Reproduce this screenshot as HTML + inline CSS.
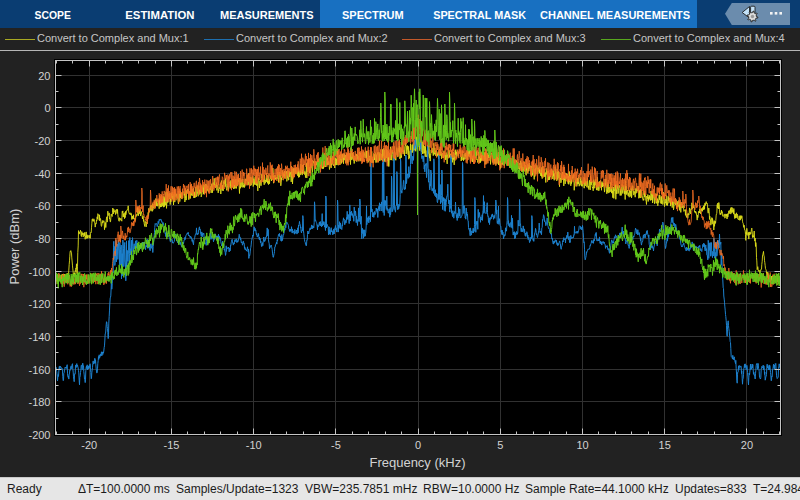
<!DOCTYPE html>
<html><head><meta charset="utf-8">
<style>
*{margin:0;padding:0;box-sizing:border-box}
html,body{width:800px;height:500px;overflow:hidden;background:#222222;font-family:"Liberation Sans",sans-serif}
.abs{position:absolute;white-space:nowrap}
#tb{position:absolute;left:0;top:0;width:800px;height:28px;background:#0a3d72}
#tbl{position:absolute;left:320px;top:0;width:377px;height:28px;background:#1870c1}
.tab{position:absolute;top:8px;font-weight:bold;font-size:11px;color:#ffffff;line-height:14px}
.lg{position:absolute;top:31px;font-size:11px;color:#c6c6c6;line-height:14px}
.ll{position:absolute;top:39px;height:1px;width:30px}
#sep{position:absolute;left:0;top:50px;width:800px;height:1px;background:#b6b6b6}
#sb{position:absolute;left:0;top:477px;width:800px;height:23px;background:#e6e6e6;border-top:1px solid #c9c9c9}
.st{position:absolute;top:482px;font-size:12px;color:#1b1b1b;line-height:14px}
.yt{position:absolute;font-size:10.5px;color:#d2d2d2;line-height:12px;text-align:right;width:30px}
.xt{position:absolute;top:440px;font-size:10.5px;color:#d2d2d2;line-height:12px;text-align:center;width:30px}
</style></head><body>
<div id="tb"></div><div id="tbl"></div>
<div class="tab" style="left:34.6px;top:8.6px;font-size:10.4px">SCOPE</div>
<div class="tab" style="left:125.3px;top:7.8px;font-size:11.35px">ESTIMATION</div>
<div class="tab" style="left:220px">MEASUREMENTS</div>
<div class="tab" style="left:342px">SPECTRUM</div>
<div class="tab" style="left:433.2px;top:8.1px;font-size:10.82px">SPECTRAL MASK</div>
<div class="tab" style="left:540px">CHANNEL MEASUREMENTS</div>
<svg class="abs" style="left:0;top:0" width="800" height="28">
<polygon points="725,13.8 731.8,3 790,3 790,25 731.8,25" fill="#6b8cad"/>
<polygon points="742.2,12.5 749.5,6.5 749.5,18" fill="#c4e2f8" stroke="#1e1e1e" stroke-width="0.9" stroke-linejoin="round"/>
<rect x="750.6" y="6.2" width="4.4" height="9.5" rx="1" fill="#c4e2f8" stroke="#1e1e1e" stroke-width="0.9"/>
<polygon points="756.40,16.50 757.88,17.01 757.66,18.09 756.10,17.99 755.74,18.67 755.26,19.26 755.94,20.66 755.03,21.27 753.99,20.10 753.26,20.33 752.50,20.40 751.99,21.88 750.91,21.66 751.01,20.10 750.33,19.74 749.74,19.26 748.34,19.94 747.73,19.03 748.90,17.99 748.67,17.26 748.60,16.50 747.12,15.99 747.34,14.91 748.90,15.01 749.26,14.33 749.74,13.74 749.06,12.34 749.97,11.73 751.01,12.90 751.74,12.67 752.50,12.60 753.01,11.12 754.09,11.34 753.99,12.90 754.67,13.26 755.26,13.74 756.66,13.06 757.27,13.97 756.10,15.01 756.33,15.74" fill="#dcdcdc" stroke="#1e1e1e" stroke-width="0.9" stroke-linejoin="round"/>
<circle cx="752.5" cy="16.5" r="1.7" fill="#9a9a9a"/>
<rect x="770" y="12" width="2.6" height="2.6" fill="#f4f4f4"/><rect x="774.7" y="12" width="2.6" height="2.6" fill="#f4f4f4"/><rect x="779.4" y="12" width="2.6" height="2.6" fill="#f4f4f4"/>
</svg>
<div class="ll" style="left:5px;background:#a9a922"></div>
<div class="lg" style="left:37px">Convert to Complex and Mux:1</div>
<div class="ll" style="left:204px;background:#1d6fb0"></div>
<div class="lg" style="left:236px">Convert to Complex and Mux:2</div>
<div class="ll" style="left:402px;background:#c4592a"></div>
<div class="lg" style="left:434px">Convert to Complex and Mux:3</div>
<div class="ll" style="left:601px;background:#58a81e"></div>
<div class="lg" style="left:633px">Convert to Complex and Mux:4</div>
<div id="sep"></div>
<svg class="abs" style="left:0;top:0" width="800" height="477">
<rect x="54.5" y="59.5" width="727" height="376" fill="none" stroke="#000" stroke-width="1"/>
<rect x="55.5" y="60.5" width="725" height="374" fill="#000"/>
<path d="M89.5 60.5V434.5M171.5 60.5V434.5M253.5 60.5V434.5M335.5 60.5V434.5M418.5 60.5V434.5M500.5 60.5V434.5M582.5 60.5V434.5M664.5 60.5V434.5M746.5 60.5V434.5M55.5 75.5H780.5M55.5 107.5H780.5M55.5 140.5H780.5M55.5 173.5H780.5M55.5 205.5H780.5M55.5 238.5H780.5M55.5 271.5H780.5M55.5 303.5H780.5M55.5 336.5H780.5M55.5 369.5H780.5M55.5 401.5H780.5" stroke="#313131" stroke-width="1" fill="none"/>
<g fill="none" stroke-width="1" stroke-linejoin="round">
<path d="M55.5 282.9L55.8 281.3L56.2 281L56.5 277.1L56.8 275.7L57.2 281.7L57.5 279.3L57.8 275L58.2 281.3L58.5 281.8L58.8 276.8L59.2 280.4L59.5 275.3L59.8 277.7L60.2 280.3L60.5 277.4L60.8 278.1L61.2 275.2L61.5 280L61.8 277.7L62.2 274L62.5 279.6L62.8 280.9L63.2 277.8L63.5 279.1L63.8 280.8L64.2 274L64.5 278L64.8 280.5L65.2 274.5L65.5 275.2L65.8 277.4L66.2 278.5L66.5 277.1L66.8 277L67.2 273.3L67.5 278L67.8 274.9L68.2 273.4L68.5 274.5L68.8 270.2L69.2 264.3L69.5 260.8L69.8 256.2L70.2 251.2L70.5 251.5L70.8 250.6L71.2 252.1L71.5 253.1L71.8 257.9L72.2 262L72.5 265.9L72.8 268.9L73.2 272.5L73.5 276L73.8 276.5L74.2 272.8L74.5 275.3L74.8 274.1L75.2 270.7L75.5 271.4L75.8 268L76.2 268.6L76.5 263.8L76.8 272L77.2 274L77.5 266.2L77.8 252.5L78.2 245.9L78.5 230.6L78.8 231.8L79.2 234.1L79.5 232.2L79.8 232.6L80.2 231.8L80.5 230.2L80.8 232.7L81.2 236.3L81.5 236.6L81.8 231.6L82.2 234.8L82.5 233.1L82.8 233.1L83.2 236.9L83.5 235.4L83.8 233L84.2 232.7L84.5 235.8L84.8 232.5L85.2 239.3L85.5 236L85.8 236.6L86.2 231.9L86.5 237.2L86.8 238.6L87.2 234.8L87.5 238.1L87.8 236.2L88.2 236.5L88.5 236L88.8 235.4L89.2 238.2L89.5 236.1L89.8 235.2L90.2 238.4L90.5 233.3L90.8 232.2L91.2 232.6L91.5 227.8L91.8 223.8L92.2 219L92.5 218.8L92.8 221.2L93.2 220.2L93.5 221.3L93.8 218.8L94.2 219.8L94.5 221.2L94.8 223.1L95.2 227.1L95.5 225.2L95.8 223.1L96.2 223.7L96.5 220L96.8 220.7L97.2 216.8L97.5 219.2L97.8 213.7L98.2 214.3L98.5 215.2L98.8 215L99.2 220.2L99.5 214.8L99.8 220.9L100.2 218.8L100.5 218.5L100.8 220.5L101.2 225.4L101.5 226.4L101.8 225.3L102.2 221.8L102.5 223.1L102.8 220.4L103.2 222.4L103.5 221.1L103.8 220.8L104.2 221.6L104.5 229.7L104.8 226.8L105.2 224.4L105.5 222.6L105.8 227.5L106.2 220.3L106.5 218.1L106.8 216.8L107.2 222.1L107.5 218.9L107.8 211.2L108.2 214.4L108.5 215.3L108.8 215.5L109.2 212.9L109.5 218.8L109.8 218L110.2 221.8L110.5 221.8L110.8 218.6L111.2 214L111.5 214.5L111.8 215.8L112.2 216.5L112.5 212.5L112.8 208L113.2 212.1L113.5 213.8L113.8 209.2L114.2 212L114.5 212.1L114.8 211.2L115.2 210.4L115.5 214.5L115.8 213.7L116.2 209.7L116.5 209.3L116.8 211.7L117.2 213.5L117.5 209.4L117.8 214.2L118.2 217.6L118.5 219.1L118.8 220.8L119.2 221.3L119.5 217.7L119.8 219L120.2 220.3L120.5 219.1L120.8 218.3L121.2 219.4L121.5 219.9L121.8 221.2L122.2 211.5L122.5 212.6L122.8 210.9L123.2 216.9L123.5 213.6L123.8 216.7L124.2 215.7L124.5 218.7L124.8 212.7L125.2 217.6L125.5 211.4L125.8 214.8L126.2 213.4L126.5 210.6L126.8 210.1L127.2 210.2L127.5 210.2L127.8 208.5L128.2 205.8L128.5 209.1L128.8 212.5L129.2 213.4L129.5 212.9L129.8 214.2L130.2 214.8L130.5 214.8L130.8 212.8L131.2 213.4L131.5 214L131.8 219.5L132.2 216.3L132.5 218.5L132.8 215.9L133.2 219.1L133.5 214.8L133.8 218.8L134.2 219L134.5 218.4L134.8 221.1L135.2 220.2L135.5 220.1L135.8 215.5L136.2 215.8L136.5 216.3L136.8 214.2L137.2 215.4L137.5 207.4L137.8 212.9L138.2 208.3L138.5 215.7L138.8 209.4L139.2 210.6L139.5 213.7L139.8 209.3L140.2 209.4L140.5 216L140.8 213.2L141.2 213.1L141.5 211.6L141.8 214.4L142.2 216.4L142.5 219L142.8 216.4L143.2 215.7L143.5 221.4L143.8 219.5L144.2 223.7L144.5 225L144.8 226.5L145.2 221.3L145.5 222.2L145.8 223.4L146.2 226.9L146.5 223.7L146.8 221.9L147.2 223.7L147.5 217L147.8 215.6L148.2 212.4L148.5 216.2L148.8 208.3L149.2 212.4L149.5 211.8L149.8 210.3L150.2 208.1L150.5 205.5L150.8 210.7L151.2 210.6L151.5 207.6L151.8 205.2L152.2 211.4L152.5 203.6L152.8 210.3L153.2 208L153.5 204.6L153.8 207.5L154.2 206.8L154.5 201.3L154.8 205.2L155.2 207.7L155.5 206L155.8 198.5L156.2 201.2L156.5 206L156.8 199.5L157.2 206.3L157.5 204.9L157.8 203.4L158.2 203.9L158.5 204.5L158.8 200.4L159.2 208.7L159.5 195.3L159.8 205.3L160.2 199L160.5 207.1L160.8 204.9L161.2 199.8L161.5 206.9L161.8 206.6L162.2 201.9L162.5 199.7L162.8 205.9L163.2 196.3L163.5 207.1L163.8 207.1L164.2 196.5L164.5 206.5L164.8 198.5L165.2 204.7L165.5 205.2L165.8 192.9L166.2 191.7L166.5 208.4L166.8 203.7L167.2 202.5L167.5 192.2L167.8 202.6L168.2 194.1L168.5 196.7L168.8 196.4L169.2 193.9L169.5 198.7L169.8 193.3L170.2 204.6L170.5 198.5L170.8 201.8L171.2 198.7L171.5 193.7L171.8 197.5L172.2 192.1L172.5 195.5L172.8 199.4L173.2 193.9L173.5 205L173.8 199.2L174.2 191.8L174.5 189.5L174.8 202.1L175.2 194.3L175.5 192.6L175.8 194.4L176.2 196.8L176.5 195.7L176.8 193.8L177.2 196.4L177.5 196.5L177.8 199L178.2 202.5L178.5 203.9L178.8 191.4L179.2 192.2L179.5 193.9L179.8 201.5L180.2 190.9L180.5 197.8L180.8 194.8L181.2 192.8L181.5 197.5L181.8 198.8L182.2 198.9L182.5 192.2L182.8 191.8L183.2 191.7L183.5 192L183.8 191.8L184.2 195.4L184.5 192.9L184.8 202L185.2 200.6L185.5 198.4L185.8 189.9L186.2 200.1L186.5 193.3L186.8 190.7L187.2 191.4L187.5 189.1L187.8 191.7L188.2 193.9L188.5 189.4L188.8 199.7L189.2 193.1L189.5 194.4L189.8 191.7L190.2 198.6L190.5 198L190.8 184.8L191.2 187.6L191.5 195.4L191.8 191.4L192.2 189L192.5 192.8L192.8 195.9L193.2 195L193.5 188.2L193.8 197.9L194.2 192.6L194.5 197.7L194.8 191.7L195.2 197.5L195.5 196.7L195.8 186.9L196.2 197L196.5 194.5L196.8 193.2L197.2 186.2L197.5 193.7L197.8 193.7L198.2 196.3L198.5 190.6L198.8 185.7L199.2 194.5L199.5 190L199.8 189.5L200.2 193.5L200.5 185.9L200.8 185.7L201.2 196.9L201.5 195.6L201.8 194.6L202.2 190.8L202.5 189.5L202.8 187L203.2 185.1L203.5 194.2L203.8 187.6L204.2 193.5L204.5 185.1L204.8 187.2L205.2 189.4L205.5 188.6L205.8 183.9L206.2 193.3L206.5 184.7L206.8 191.1L207.2 190.5L207.5 189.9L207.8 185.7L208.2 191.3L208.5 192L208.8 190.1L209.2 190.2L209.5 189.7L209.8 188.3L210.2 189.9L210.5 189.1L210.8 186.2L211.2 192.9L211.5 186.7L211.8 183.7L212.2 190L212.5 192.7L212.8 183.6L213.2 182.6L213.5 186L213.8 185.3L214.2 178.3L214.5 185.2L214.8 186.9L215.2 184.4L215.5 188L215.8 186.4L216.2 186.2L216.5 182.7L216.8 190.4L217.2 188.6L217.5 187.8L217.8 184.8L218.2 192.9L218.5 189.7L218.8 190.8L219.2 187.4L219.5 188L219.8 188.8L220.2 183.9L220.5 183.5L220.8 194L221.2 184.1L221.5 180.6L221.8 185.8L222.2 190.5L222.5 185.2L222.8 186.9L223.2 190.9L223.5 181.8L223.8 182.2L224.2 180.1L224.5 184.1L224.8 181.4L225.2 186.7L225.5 178.4L225.8 180.8L226.2 188.4L226.5 188.7L226.8 190.4L227.2 183.8L227.5 186L227.8 187.1L228.2 189.9L228.5 190.6L228.8 183.3L229.2 181.8L229.5 182.5L229.8 182.3L230.2 188.4L230.5 186.5L230.8 180.4L231.2 186.4L231.5 186.8L231.8 184.8L232.2 187.6L232.5 179.6L232.8 187L233.2 179.3L233.5 188.9L233.8 185L234.2 188.6L234.5 180.2L234.8 180.8L235.2 188.4L235.5 179.4L235.8 182.1L236.2 187.6L236.5 188.4L236.8 179.8L237.2 178.9L237.5 185.6L237.8 180.6L238.2 181.5L238.5 178.5L238.8 182.1L239.2 187.6L239.5 193.5L239.8 178.1L240.2 178.6L240.5 188.3L240.8 185.2L241.2 179.6L241.5 184.9L241.8 187L242.2 187.3L242.5 185.1L242.8 179L243.2 187.4L243.5 185.3L243.8 187L244.2 182.8L244.5 187.5L244.8 186.6L245.2 180.9L245.5 178.8L245.8 184.3L246.2 179.3L246.5 180.9L246.8 179.5L247.2 175.2L247.5 180.9L247.8 185L248.2 183.8L248.5 173.4L248.8 184.3L249.2 185.4L249.5 181.8L249.8 176.7L250.2 185.8L250.5 184.9L250.8 176.9L251.2 179.4L251.5 185.2L251.8 183.6L252.2 177.7L252.5 180L252.8 176.4L253.2 186.5L253.5 185.1L253.8 178.6L254.2 180.6L254.5 184.5L254.8 181.8L255.2 176.6L255.5 184.7L255.8 183.9L256.2 175.5L256.5 185.5L256.8 180.8L257.2 182L257.5 183.1L257.8 190.9L258.2 180.8L258.5 177.8L258.8 179.6L259.2 185.1L259.5 188L259.8 181.1L260.2 181.1L260.5 180.3L260.8 185.6L261.2 185.7L261.5 178.3L261.8 174.2L262.2 176L262.5 177.1L262.8 178.9L263.2 182L263.5 181.9L263.8 179.5L264.2 184.8L264.5 174.9L264.8 178.6L265.2 183.3L265.5 181.6L265.8 180L266.2 181.7L266.5 173.4L266.8 181.8L267.2 179.4L267.5 183.3L267.8 175.2L268.2 177.8L268.5 184.6L268.8 176.6L269.2 181L269.5 183.8L269.8 179.2L270.2 178.8L270.5 178.8L270.8 175.5L271.2 178.6L271.5 181L271.8 178.3L272.2 176.1L272.5 176.9L272.8 168L273.2 172.1L273.5 183.2L273.8 176.5L274.2 180.6L274.5 179.8L274.8 175L275.2 175.4L275.5 179.4L275.8 177.5L276.2 179.4L276.5 178.4L276.8 177L277.2 178.9L277.5 176.7L277.8 171.9L278.2 177.5L278.5 182.4L278.8 179.9L279.2 174.1L279.5 177L279.8 172L280.2 178.9L280.5 175.2L280.8 185.8L281.2 182.2L281.5 177.8L281.8 180.1L282.2 170.4L282.5 174.1L282.8 177.2L283.2 172.5L283.5 176.7L283.8 174.2L284.2 175.6L284.5 171L284.8 178.5L285.2 172.9L285.5 173.7L285.8 171.6L286.2 172.6L286.5 171.3L286.8 181.4L287.2 179.2L287.5 178.4L287.8 170.4L288.2 172.3L288.5 180.2L288.8 179.9L289.2 171.2L289.5 176.1L289.8 177L290.2 173.9L290.5 172.8L290.8 171.8L291.2 181.9L291.5 166.3L291.8 177.2L292.2 168.8L292.5 184L292.8 179L293.2 169.9L293.5 168.3L293.8 176.9L294.2 170.4L294.5 174.9L294.8 168.1L295.2 173.9L295.5 172.7L295.8 167.8L296.2 171L296.5 172.8L296.8 173.4L297.2 170.9L297.5 174.8L297.8 175.8L298.2 167.9L298.5 177.4L298.8 170.6L299.2 173.4L299.5 177.1L299.8 174.1L300.2 170.9L300.5 174.7L300.8 164.2L301.2 165.6L301.5 173.3L301.8 169.7L302.2 175.1L302.5 165.1L302.8 173.2L303.2 169.8L303.5 164.3L303.8 169L304.2 173.7L304.5 174.5L304.8 171.4L305.2 172.1L305.5 177.6L305.8 174.6L306.2 169.3L306.5 163.3L306.8 178L307.2 163.2L307.5 161.8L307.8 168.5L308.2 169.6L308.5 158.5L308.8 169.8L309.2 170.8L309.5 172.8L309.8 166.9L310.2 173.1L310.5 163.7L310.8 168L311.2 163.7L311.5 165.2L311.8 163.7L312.2 172.5L312.5 171.9L312.8 167.1L313.2 160.9L313.5 162.5L313.8 161.7L314.2 163.1L314.5 164.8L314.8 164L315.2 164.6L315.5 168.8L315.8 164L316.2 165L316.5 164.4L316.8 161.5L317.2 165.5L317.5 160.2L317.8 159.2L318.2 164.9L318.5 166.3L318.8 159L319.2 163.8L319.5 159.1L319.8 161.7L320.2 165.6L320.5 165.6L320.8 162.6L321.2 167.6L321.5 167.8L321.8 159.7L322.2 168.8L322.5 160.1L322.8 168.4L323.2 164.4L323.5 168.6L323.8 161L324.2 167.2L324.5 161L324.8 165.4L325.2 165.9L325.5 166.9L325.8 164.3L326.2 161.9L326.5 156.4L326.8 165.4L327.2 163.5L327.5 157.6L327.8 164.9L328.2 160.9L328.5 164.3L328.8 161.7L329.2 165.9L329.5 169.5L329.8 166.9L330.2 166.9L330.5 155.8L330.8 163.4L331.2 167.9L331.5 155.9L331.8 165.1L332.2 158.9L332.5 162.4L332.8 156.4L333.2 163.5L333.5 166L333.8 164.6L334.2 164.1L334.5 166.3L334.8 168L335.2 157.7L335.5 161.6L335.8 165.2L336.2 158.7L336.5 160L336.8 165L337.2 150.7L337.5 155.2L337.8 158.9L338.2 165.2L338.5 155.9L338.8 161.3L339.2 162.8L339.5 154.9L339.8 164.9L340.2 164.1L340.5 154.4L340.8 159.9L341.2 159.3L341.5 163.4L341.8 154.2L342.2 158.2L342.5 154.4L342.8 160.2L343.2 154.5L343.5 163.8L343.8 157.7L344.2 153.5L344.5 157.2L344.8 160.2L345.2 155.9L345.5 155L345.8 163.1L346.2 160.4L346.5 153.5L346.8 161.8L347.2 154L347.5 163L347.8 163.4L348.2 156.3L348.5 152.8L348.8 159.6L349.2 159.8L349.5 156.7L349.8 157.5L350.2 152.8L350.5 164.6L350.8 153.6L351.2 148.1L351.5 155.5L351.8 160.1L352.2 155L352.5 152.8L352.8 158.6L353.2 155.2L353.5 160.4L353.8 155.7L354.2 163.5L354.5 159.3L354.8 158.3L355.2 158L355.5 159.1L355.8 158.8L356.2 158.5L356.5 154.1L356.8 161.7L357.2 156.6L357.5 154.6L357.8 159.5L358.2 159.8L358.5 156.2L358.8 160.6L359.2 154L359.5 151.9L359.8 154.1L360.2 161.2L360.5 152.8L360.8 159.7L361.2 158.6L361.5 158.8L361.8 155.4L362.2 156.5L362.5 161.8L362.8 156.2L363.2 151.8L363.5 157L363.8 151.8L364.2 152.9L364.5 153.9L364.8 157.5L365.2 157.9L365.5 156.1L365.8 151.3L366.2 152.4L366.5 158.4L366.8 150.8L367.2 160.8L367.5 158.4L367.8 157.9L368.2 162.4L368.5 152.2L368.8 158.5L369.2 155.9L369.5 160.5L369.8 158.3L370.2 157.8L370.5 155.8L370.8 162L371.2 157.6L371.5 153.1L371.8 151.5L372.2 162.7L372.5 162.2L372.8 158.9L373.2 160.4L373.5 162.8L373.8 159.7L374.2 154.2L374.5 159.9L374.8 158.1L375.2 152.6L375.5 157.4L375.8 162.6L376.2 162.5L376.5 154.6L376.8 162L377.2 152.8L377.5 154.3L377.8 152.3L378.2 154.2L378.5 162.2L378.8 152L379.2 152.3L379.5 153.7L379.8 160.9L380.2 153.3L380.5 154.3L380.8 155.8L381.2 160.2L381.5 154.1L381.8 158.9L382.2 160.1L382.5 149.4L382.8 160.9L383.2 153.2L383.5 155.9L383.8 148.3L384.2 161.3L384.5 150.1L384.8 161.6L385.2 155.8L385.5 158.5L385.8 157.9L386.2 149.2L386.5 157.9L386.8 151.7L387.2 149.9L387.5 161L387.8 151.7L388.2 165.6L388.5 151.5L388.8 166.6L389.2 159L389.5 153L389.8 154.5L390.2 160.1L390.5 146.8L390.8 148.5L391.2 158.5L391.5 160.1L391.8 153L392.2 150.4L392.5 150.6L392.8 154.5L393.2 160.6L393.5 158.2L393.8 158.3L394.2 152.4L394.5 151.3L394.8 156.4L395.2 159.8L395.5 156L395.8 160.3L396.2 153L396.5 151.3L396.8 147.5L397.2 150.2L397.5 156.5L397.8 157.1L398.2 149.6L398.5 151.1L398.8 147.8L399.2 152.2L399.5 141.5L399.8 158.8L400.2 157L400.5 158.5L400.8 147.7L401.2 150.1L401.5 157.6L401.8 149L402.2 150.3L402.5 142.6L402.8 145.8L403.2 153.8L403.5 150.6L403.8 150.1L404.2 150.8L404.5 156L404.8 146.4L405.2 145.5L405.5 146.1L405.8 143L406.2 154L406.5 151.8L406.8 145.9L407.2 149.5L407.5 145.6L407.8 152L408.2 154.8L408.5 146.4L408.8 159.2L409.2 155.3L409.5 158L409.8 151.2L410.2 151.4L410.5 143.7L410.8 155.7L411.2 153.7L411.5 151.2L411.8 152.7L412.2 144.7L412.5 152.4L412.8 150.6L413.2 143.4L413.5 150.5L413.8 147.4L414.2 149.3L414.5 141.1L414.8 150.3L415.2 143.5L415.5 149.7L415.8 151.3L416.2 137.6L416.5 145.8L416.8 136.6L417.2 140.3L417.5 149.5L417.8 144.4L418.2 145.4L418.5 142.1L418.8 140.9L419.2 138.1L419.5 145.6L419.8 150.7L420.2 144.1L420.5 144.5L420.8 148.8L421.2 139.7L421.5 148L421.8 152.2L422.2 141.5L422.5 153.8L422.8 151.7L423.2 153.6L423.5 142.8L423.8 148.7L424.2 152.5L424.5 153.3L424.8 145.9L425.2 156.7L425.5 145.2L425.8 153.7L426.2 156.9L426.5 155.7L426.8 156.6L427.2 150.5L427.5 156.6L427.8 156.8L428.2 152.8L428.5 153.4L428.8 145.4L429.2 148.5L429.5 158.2L429.8 153.8L430.2 161.1L430.5 155.8L430.8 154L431.2 150L431.5 152.5L431.8 148.5L432.2 147.9L432.5 152.2L432.8 152L433.2 155.7L433.5 155L433.8 143.2L434.2 148.7L434.5 154.3L434.8 148L435.2 149.5L435.5 152.4L435.8 155.9L436.2 151L436.5 150.4L436.8 155L437.2 155.5L437.5 153.7L437.8 156.3L438.2 151.7L438.5 158.6L438.8 154.5L439.2 149.4L439.5 149.1L439.8 155.6L440.2 146.7L440.5 153.3L440.8 155.4L441.2 151.9L441.5 158.8L441.8 157.6L442.2 153.8L442.5 153L442.8 155.2L443.2 156.2L443.5 158L443.8 150.8L444.2 151.3L444.5 154.2L444.8 156.6L445.2 155.2L445.5 159.8L445.8 153.8L446.2 152.6L446.5 156L446.8 160.3L447.2 163.9L447.5 154.7L447.8 154.9L448.2 147.5L448.5 147.6L448.8 154.6L449.2 150.3L449.5 157.4L449.8 154.9L450.2 158.1L450.5 157.4L450.8 153.8L451.2 158.5L451.5 152L451.8 158.7L452.2 155.1L452.5 162.3L452.8 155.3L453.2 152.1L453.5 159.5L453.8 158.2L454.2 164.9L454.5 155.5L454.8 159.5L455.2 150.4L455.5 154.6L455.8 149.6L456.2 158L456.5 151.8L456.8 154L457.2 154.2L457.5 153.5L457.8 154.2L458.2 156.4L458.5 152.4L458.8 153.2L459.2 150.5L459.5 151L459.8 150.2L460.2 153.4L460.5 150.3L460.8 151.4L461.2 161L461.5 156.8L461.8 158.2L462.2 159.9L462.5 151L462.8 153.6L463.2 155.1L463.5 160.8L463.8 157.7L464.2 159.6L464.5 156.5L464.8 153.6L465.2 156.4L465.5 152.9L465.8 159.2L466.2 158L466.5 153.6L466.8 157.9L467.2 152L467.5 160.3L467.8 148.4L468.2 156.4L468.5 155L468.8 150.9L469.2 156.5L469.5 150L469.8 150.2L470.2 153.5L470.5 161.7L470.8 150.3L471.2 152.1L471.5 153.5L471.8 159.1L472.2 158.2L472.5 162L472.8 156.4L473.2 155.5L473.5 162.5L473.8 156L474.2 153.1L474.5 150.2L474.8 152.8L475.2 157.6L475.5 155.6L475.8 151.2L476.2 155.9L476.5 151.1L476.8 160L477.2 159.3L477.5 160.5L477.8 162.6L478.2 159.8L478.5 151.9L478.8 152.5L479.2 161.4L479.5 156.6L479.8 163L480.2 151.9L480.5 162.4L480.8 151.8L481.2 161.2L481.5 155L481.8 160L482.2 151.6L482.5 153.9L482.8 160.3L483.2 155L483.5 148.6L483.8 157L484.2 160.8L484.5 157.7L484.8 152.4L485.2 164.4L485.5 152.2L485.8 159.4L486.2 157.8L486.5 159.4L486.8 162.6L487.2 158.2L487.5 153L487.8 160.9L488.2 155.3L488.5 158L488.8 154.1L489.2 154.3L489.5 157.8L489.8 156.1L490.2 155.7L490.5 164.4L490.8 160.4L491.2 154.4L491.5 153L491.8 153.2L492.2 155.6L492.5 162.2L492.8 162.5L493.2 160L493.5 157.1L493.8 163.5L494.2 161.4L494.5 158.8L494.8 160.3L495.2 164.4L495.5 158.2L495.8 163.6L496.2 164.4L496.5 150.2L496.8 158.5L497.2 163.1L497.5 157.8L497.8 155.1L498.2 161.4L498.5 164.9L498.8 157.6L499.2 163.1L499.5 165.3L499.8 160.6L500.2 164.2L500.5 168.5L500.8 160.3L501.2 161.9L501.5 159.7L501.8 164.6L502.2 162.8L502.5 162.8L502.8 164.7L503.2 153.2L503.5 162.4L503.8 164.7L504.2 165.7L504.5 163.8L504.8 157.6L505.2 161.8L505.5 156.6L505.8 159L506.2 157.7L506.5 157L506.8 158.2L507.2 157.8L507.5 165.4L507.8 161.9L508.2 160.8L508.5 159.1L508.8 165.6L509.2 161.3L509.5 164.5L509.8 159.9L510.2 158.2L510.5 166.2L510.8 166.1L511.2 166.3L511.5 167.5L511.8 163.2L512.2 160.6L512.5 169L512.8 155.7L513.2 168.5L513.5 159.3L513.8 158.6L514.2 159.9L514.5 170L514.8 166.9L515.2 167.2L515.5 168.9L515.8 171L516.2 164.5L516.5 160.4L516.8 168.3L517.2 169.5L517.5 168L517.8 161.9L518.2 168.4L518.5 166.3L518.8 169L519.2 168.1L519.5 171.3L519.8 163.2L520.2 164.7L520.5 160.8L520.8 168.3L521.2 165.8L521.5 171.5L521.8 162.5L522.2 168.4L522.5 171.7L522.8 166.9L523.2 168.6L523.5 172.9L523.8 171.9L524.2 161.6L524.5 168.8L524.8 165.8L525.2 167.3L525.5 164.9L525.8 173.9L526.2 175.3L526.5 166.6L526.8 170.4L527.2 164.2L527.5 172.9L527.8 173.3L528.2 170.8L528.5 164.7L528.8 171.2L529.2 163L529.5 164.2L529.8 168.6L530.2 165.7L530.5 171.2L530.8 171.8L531.2 176.4L531.5 166.1L531.8 176L532.2 173.3L532.5 175.2L532.8 165.5L533.2 164.9L533.5 162.7L533.8 171.9L534.2 179.4L534.5 169.2L534.8 176.6L535.2 173.9L535.5 167.8L535.8 174L536.2 170L536.5 166.8L536.8 165.3L537.2 166.4L537.5 167.5L537.8 173.5L538.2 169.3L538.5 168.1L538.8 171.3L539.2 166.7L539.5 173.3L539.8 169.1L540.2 172.9L540.5 172.8L540.8 175.9L541.2 170.1L541.5 176.4L541.8 167.3L542.2 178.6L542.5 170.2L542.8 166L543.2 171L543.5 176.4L543.8 169.5L544.2 169L544.5 176.7L544.8 176L545.2 172.5L545.5 177.8L545.8 182.5L546.2 168.4L546.5 170.9L546.8 174.5L547.2 171.9L547.5 171.2L547.8 173.1L548.2 171L548.5 180.1L548.8 178.5L549.2 175L549.5 179.8L549.8 173.1L550.2 177.2L550.5 175L550.8 171.5L551.2 173.3L551.5 174.4L551.8 169.5L552.2 175.5L552.5 171.5L552.8 179L553.2 170.4L553.5 176.2L553.8 173.9L554.2 180.3L554.5 173.4L554.8 179.3L555.2 166.8L555.5 173.3L555.8 171.4L556.2 172.5L556.5 177.1L556.8 180.9L557.2 168.9L557.5 173.3L557.8 179.6L558.2 174.9L558.5 171L558.8 177.7L559.2 175.1L559.5 186.7L559.8 173L560.2 179.1L560.5 178L560.8 182.9L561.2 182.3L561.5 178.3L561.8 174.3L562.2 179.7L562.5 172.2L562.8 177.4L563.2 179.2L563.5 177.1L563.8 185.9L564.2 175L564.5 180.3L564.8 176L565.2 183.9L565.5 179.6L565.8 176.5L566.2 177.5L566.5 173.5L566.8 178.6L567.2 173.9L567.5 175.9L567.8 178.7L568.2 183.8L568.5 175.9L568.8 184.4L569.2 178.5L569.5 171.5L569.8 182.2L570.2 175.1L570.5 176.3L570.8 185.8L571.2 179.5L571.5 183.6L571.8 181.6L572.2 177.4L572.5 178.3L572.8 175.6L573.2 174.8L573.5 177.4L573.8 175L574.2 190.3L574.5 185.7L574.8 183L575.2 180.3L575.5 181.1L575.8 183.2L576.2 178.4L576.5 182.1L576.8 186.4L577.2 184.2L577.5 178.1L577.8 184.2L578.2 178.8L578.5 183.9L578.8 177L579.2 186.2L579.5 183.8L579.8 184.2L580.2 184.6L580.5 180.5L580.8 177.3L581.2 185.9L581.5 185.8L581.8 180.7L582.2 186.4L582.5 181.9L582.8 182.3L583.2 183L583.5 181.7L583.8 181.9L584.2 188.2L584.5 177.8L584.8 181.8L585.2 185.1L585.5 185.8L585.8 180.7L586.2 184.1L586.5 181.8L586.8 187.2L587.2 186.2L587.5 178.1L587.8 182.3L588.2 188.1L588.5 186L588.8 189.5L589.2 186.8L589.5 180.3L589.8 180.3L590.2 190L590.5 175.9L590.8 181.3L591.2 184.8L591.5 183.7L591.8 181.2L592.2 186.7L592.5 188.1L592.8 187L593.2 190.8L593.5 185.6L593.8 179.5L594.2 188.3L594.5 186.4L594.8 181.5L595.2 185.2L595.5 179.5L595.8 184.5L596.2 185L596.5 190.1L596.8 181.9L597.2 181.7L597.5 177.3L597.8 190.3L598.2 184.6L598.5 187.7L598.8 190.8L599.2 189.4L599.5 181.5L599.8 184.3L600.2 181.8L600.5 180.5L600.8 181.3L601.2 185L601.5 190.3L601.8 182.7L602.2 181.7L602.5 187L602.8 183L603.2 186.1L603.5 183.4L603.8 185.7L604.2 188.3L604.5 192.1L604.8 189.9L605.2 183L605.5 185.4L605.8 178.8L606.2 185.4L606.5 188.2L606.8 193.8L607.2 190.1L607.5 191.9L607.8 182.5L608.2 193.1L608.5 184.3L608.8 188.6L609.2 187.1L609.5 192.4L609.8 191.6L610.2 186.5L610.5 182.4L610.8 191.7L611.2 189.7L611.5 192.8L611.8 186.6L612.2 193.4L612.5 190.9L612.8 197.7L613.2 186.9L613.5 188.3L613.8 198.4L614.2 189.9L614.5 190.6L614.8 186.5L615.2 183.7L615.5 184.8L615.8 199.3L616.2 184.7L616.5 193.3L616.8 194L617.2 183.7L617.5 186.2L617.8 189.6L618.2 193.5L618.5 190.2L618.8 186L619.2 185.2L619.5 187.1L619.8 188.6L620.2 195.5L620.5 188.9L620.8 192L621.2 195.4L621.5 188.1L621.8 186.6L622.2 184.5L622.5 192L622.8 193.5L623.2 190.5L623.5 189.7L623.8 185.4L624.2 190.3L624.5 194.1L624.8 189L625.2 199.5L625.5 180.9L625.8 191.4L626.2 193.7L626.5 186.3L626.8 194.7L627.2 190.6L627.5 189.9L627.8 191.6L628.2 195.9L628.5 193.4L628.8 192.8L629.2 197.2L629.5 189.9L629.8 192.6L630.2 190.8L630.5 192L630.8 196.5L631.2 188.2L631.5 197.9L631.8 196L632.2 188.5L632.5 190.1L632.8 185.7L633.2 188.3L633.5 190.6L633.8 195.1L634.2 191.2L634.5 191.8L634.8 194.3L635.2 197.2L635.5 194.4L635.8 188.3L636.2 193.2L636.5 188.4L636.8 189L637.2 191.2L637.5 189L637.8 191.1L638.2 186L638.5 190.2L638.8 198.3L639.2 196.2L639.5 190.1L639.8 197.7L640.2 190.1L640.5 189.4L640.8 198L641.2 191.8L641.5 189.9L641.8 191.8L642.2 195.6L642.5 198.4L642.8 198.3L643.2 200.4L643.5 199.1L643.8 200.2L644.2 193.6L644.5 197.1L644.8 190.8L645.2 193.7L645.5 194.9L645.8 200.4L646.2 201.3L646.5 204.5L646.8 196L647.2 198.7L647.5 198.6L647.8 194.5L648.2 201.5L648.5 197.2L648.8 200.1L649.2 195.1L649.5 198.6L649.8 196.2L650.2 198.4L650.5 200.4L650.8 191.2L651.2 192L651.5 193.7L651.8 200.1L652.2 190.9L652.5 203L652.8 194.4L653.2 193.5L653.5 196.1L653.8 198L654.2 201.9L654.5 203.7L654.8 194.9L655.2 193.5L655.5 200L655.8 199.7L656.2 203.3L656.5 193.8L656.8 203.2L657.2 200.9L657.5 198.6L657.8 205.8L658.2 200.7L658.5 202.7L658.8 198.9L659.2 194.8L659.5 199.6L659.8 195.1L660.2 202.1L660.5 203.3L660.8 202.8L661.2 196.5L661.5 203.7L661.8 196.3L662.2 199.4L662.5 200.8L662.8 204.5L663.2 201.5L663.5 192.3L663.8 194L664.2 194.2L664.5 206.6L664.8 204.9L665.2 202.2L665.5 203L665.8 199L666.2 201.2L666.5 205.3L666.8 195.8L667.2 199.8L667.5 205.5L667.8 202.9L668.2 203.1L668.5 196.4L668.8 200.6L669.2 199.2L669.5 198.1L669.8 202.5L670.2 197.9L670.5 206.1L670.8 201.1L671.2 203.8L671.5 199.6L671.8 198.7L672.2 207.6L672.5 201.3L672.8 205L673.2 201.6L673.5 209.9L673.8 208.1L674.2 204.2L674.5 203.1L674.8 201.5L675.2 198.8L675.5 204.8L675.8 201.3L676.2 199.8L676.5 208.2L676.8 208.7L677.2 201.2L677.5 206.6L677.8 207.3L678.2 202.6L678.5 206.4L678.8 200.4L679.2 201.9L679.5 210.3L679.8 204.4L680.2 201.9L680.5 205L680.8 212.4L681.2 203.5L681.5 203L681.8 202.4L682.2 208.1L682.5 204.3L682.8 206.4L683.2 205.4L683.5 207.1L683.8 211.4L684.2 211.1L684.5 210.5L684.8 209.7L685.2 210.2L685.5 215.3L685.8 209.5L686.2 215.2L686.5 217.4L686.8 215.2L687.2 214.1L687.5 213.7L687.8 218.2L688.2 214.4L688.5 213.5L688.8 215.1L689.2 213.2L689.5 208L689.8 208L690.2 212.7L690.5 213.8L690.8 209.4L691.2 210L691.5 209.7L691.8 202.8L692.2 204L692.5 208.9L692.8 205L693.2 208L693.5 204.6L693.8 205.2L694.2 206.5L694.5 212.1L694.8 212.3L695.2 211L695.5 213.2L695.8 211.6L696.2 212.2L696.5 215.1L696.8 216L697.2 220.1L697.5 215.2L697.8 217.7L698.2 215.8L698.5 211.6L698.8 212.3L699.2 211.1L699.5 213L699.8 208.6L700.2 211.8L700.5 213.8L700.8 211.6L701.2 209.2L701.5 211L701.8 208.3L702.2 209.6L702.5 211.3L702.8 207.4L703.2 209.8L703.5 206L703.8 209.6L704.2 204.9L704.5 209.2L704.8 203.2L705.2 203.1L705.5 205.4L705.8 203.6L706.2 201.6L706.5 203.7L706.8 203.7L707.2 203.2L707.5 204.8L707.8 211L708.2 213.2L708.5 210.9L708.8 208L709.2 211.7L709.5 219.4L709.8 216.2L710.2 220.1L710.5 219.7L710.8 225.2L711.2 220.8L711.5 218.5L711.8 217.6L712.2 224.2L712.5 218.4L712.8 220.6L713.2 221.9L713.5 223.8L713.8 230L714.2 220.6L714.5 226.3L714.8 222.2L715.2 221.1L715.5 223.4L715.8 220.6L716.2 215.1L716.5 213.8L716.8 213.3L717.2 204.6L717.5 208.1L717.8 203L718.2 206.7L718.5 208.9L718.8 202.5L719.2 204.8L719.5 209.3L719.8 213.3L720.2 214.7L720.5 213L720.8 214.5L721.2 212.5L721.5 210L721.8 213.2L722.2 211.6L722.5 215.8L722.8 215.7L723.2 216.5L723.5 215.6L723.8 215.6L724.2 213.9L724.5 214.3L724.8 218.2L725.2 217.8L725.5 214.3L725.8 213.9L726.2 216L726.5 214.2L726.8 218.6L727.2 219L727.5 213.7L727.8 217.1L728.2 215.5L728.5 214.3L728.8 210.8L729.2 213.7L729.5 211.9L729.8 210.4L730.2 211.6L730.5 208.5L730.8 214.1L731.2 207.3L731.5 209.6L731.8 212.8L732.2 207.6L732.5 209.7L732.8 212.2L733.2 210L733.5 214.1L733.8 208.5L734.2 212.4L734.5 217.4L734.8 218.6L735.2 213.9L735.5 218L735.8 214.9L736.2 213.9L736.5 212.8L736.8 217.8L737.2 214.1L737.5 215.5L737.8 219L738.2 218.7L738.5 219.6L738.8 220L739.2 215.7L739.5 218.7L739.8 220.4L740.2 216.3L740.5 219.8L740.8 215.5L741.2 217.7L741.5 218.4L741.8 215.8L742.2 218.4L742.5 221.3L742.8 222.8L743.2 223.4L743.5 226L743.8 227.4L744.2 225.2L744.5 229.7L744.8 229.5L745.2 230.9L745.5 234.6L745.8 240.4L746.2 232.2L746.5 234.5L746.8 228.3L747.2 231.9L747.5 234.8L747.8 235.4L748.2 234.9L748.5 232.5L748.8 239.1L749.2 231.9L749.5 233.7L749.8 235L750.2 232.3L750.5 233.9L750.8 234L751.2 231.2L751.5 229.3L751.8 228.1L752.2 231.9L752.5 237.5L752.8 235.3L753.2 235.8L753.5 237.3L753.8 235.1L754.2 231L754.5 237L754.8 241.1L755.2 238.1L755.5 246.5L755.8 242.5L756.2 244.8L756.5 257.7L756.8 260.9L757.2 269.7L757.5 267.7L757.8 266.7L758.2 269.8L758.5 271.3L758.8 270.9L759.2 270.2L759.5 272.5L759.8 273.3L760.2 271.8L760.5 271.5L760.8 269.7L761.2 269.1L761.5 269.3L761.8 264.4L762.2 261.3L762.5 256L762.8 254.4L763.2 253.1L763.5 251.4L763.8 255.2L764.2 256.2L764.5 260.7L764.8 262.5L765.2 265.8L765.5 268.7L765.8 269.3L766.2 270.2L766.5 273.6L766.8 272.2L767.2 272.9L767.5 277.7L767.8 272.2L768.2 275.2L768.5 281.2L768.8 277.5L769.2 275.9L769.5 276.2L769.8 278.9L770.2 281L770.5 281.8L770.8 277.5L771.2 280.7L771.5 276.2L771.8 279.8L772.2 276.1L772.5 283.8L772.8 283.8L773.2 275.9L773.5 280.9L773.8 277.7L774.2 281.1L774.5 279.2L774.8 276.7L775.2 276.1L775.5 276.2L775.8 280.7L776.2 278.3L776.5 279.2L776.8 277.2L777.2 274.2L777.5 277.8L777.8 282L778.2 277.5L778.5 277.2L778.8 280.9L779.2 277.1L779.5 277.8L779.8 277.9L780.2 282.3L780.5 276.6" stroke="#dede1a" stroke-width="0.9"/>
<path d="M55.5 366.5L55.8 367L56.2 367.3L56.5 370.9L56.8 371.7L57.2 376.1L57.5 381L57.8 377.8L58.2 374.5L58.5 376.4L58.8 372L59.2 366.4L59.5 366.2L59.8 369.2L60.2 366L60.5 367.4L60.8 367.1L61.2 367.2L61.5 367.6L61.8 368.9L62.2 368.5L62.5 371.1L62.8 376.7L63.2 380.7L63.5 380.3L63.8 373.3L64.2 372.6L64.5 369.4L64.8 369.4L65.2 367L65.5 368L65.8 367.7L66.2 368.4L66.5 368.3L66.8 365.9L67.2 364.7L67.5 373.2L67.8 376.3L68.2 377.4L68.5 375.9L68.8 379.1L69.2 373.7L69.5 373.8L69.8 370L70.2 370.3L70.5 368.1L70.8 366.9L71.2 365.8L71.5 367.7L71.8 368.9L72.2 364L72.5 363.7L72.8 368.7L73.2 372.1L73.5 376.8L73.8 379.3L74.2 381.7L74.5 375.1L74.8 373.6L75.2 373.9L75.5 365.2L75.8 365.1L76.2 367.5L76.5 364.8L76.8 363.6L77.2 366.6L77.5 365L77.8 366.5L78.2 368L78.5 370.5L78.8 372.9L79.2 380.5L79.5 384.8L79.8 377.4L80.2 375.9L80.5 372.5L80.8 370.9L81.2 365.3L81.5 365.2L81.8 366.9L82.2 369.8L82.5 363.7L82.8 363.1L83.2 366.1L83.5 365.8L83.8 371.7L84.2 374.9L84.5 379.2L84.8 379.3L85.2 382.6L85.5 379.9L85.8 370.7L86.2 367.1L86.5 366.1L86.8 368.6L87.2 364.8L87.5 370L87.8 367.2L88.2 369.1L88.5 366.2L88.8 368.7L89.2 365.5L89.5 367.5L89.8 364.2L90.2 363.8L90.5 367.9L90.8 372.6L91.2 378.8L91.5 378.2L91.8 372.9L92.2 370.1L92.5 367.7L92.8 363.7L93.2 360.9L93.5 364.1L93.8 363.3L94.2 362.2L94.5 363.3L94.8 358.3L95.2 362.9L95.5 359.8L95.8 364.2L96.2 369L96.5 371L96.8 373.1L97.2 372.4L97.5 368.8L97.8 363.7L98.2 360.5L98.5 356.5L98.8 359.3L99.2 354.8L99.5 357.8L99.8 357.5L100.2 356.4L100.5 354.1L100.8 355.8L101.2 353.1L101.5 351.8L101.8 355.8L102.2 353.3L102.5 351.9L102.8 354.5L103.2 352L103.5 352.9L103.8 351L104.2 347.3L104.5 345.9L104.8 341L105.2 333.6L105.5 333.7L105.8 331L106.2 324.6L106.5 321.7L106.8 322.2L107.2 326.7L107.5 328.5L107.8 332.7L108.2 338.6L108.5 334.8L108.8 323.1L109.2 316.3L109.5 310.1L109.8 304L110.2 298L110.5 297.2L110.8 295.9L111.2 287L111.5 276.7L111.8 289.2L112.2 283.6L112.5 272.8L112.8 273L113.2 272.9L113.5 247.2L113.8 241.3L114.2 258.6L114.5 246.5L114.8 265.5L115.2 262.6L115.5 254.6L115.8 240L116.2 243L116.5 261.8L116.8 249.1L117.2 254.5L117.5 244L117.8 259.4L118.2 251.1L118.5 240.2L118.8 248.6L119.2 250.8L119.5 264.7L119.8 242.5L120.2 246.7L120.5 249.4L120.8 265.2L121.2 245.1L121.5 279L121.8 263.9L122.2 253.6L122.5 275.6L122.8 240L123.2 243L123.5 248.8L123.8 266.6L124.2 262.1L124.5 244.8L124.8 242.4L125.2 260L125.5 264.9L125.8 280.8L126.2 263.8L126.5 240.9L126.8 266.3L127.2 250.3L127.5 251.1L127.8 261.3L128.2 254.7L128.5 250.7L128.8 240.5L129.2 263.1L129.5 253.6L129.8 237.5L130.2 251.2L130.5 254.8L130.8 248.7L131.2 251.9L131.5 240.2L131.8 259.2L132.2 246.7L132.5 237.6L132.8 241.7L133.2 251.7L133.5 249.8L133.8 247.1L134.2 243.8L134.5 248.5L134.8 248.7L135.2 244.3L135.5 240.8L135.8 248.2L136.2 247.3L136.5 247.9L136.8 240.3L137.2 248.5L137.5 245.7L137.8 247.5L138.2 244.2L138.5 245L138.8 244.9L139.2 245.1L139.5 247.8L139.8 246.3L140.2 248.2L140.5 247.5L140.8 248.8L141.2 247.5L141.5 245.2L141.8 247.1L142.2 243.8L142.5 242.2L142.8 246.2L143.2 243.4L143.5 242.5L143.8 243.6L144.2 243.9L144.5 242.1L144.8 246.1L145.2 247.4L145.5 249.7L145.8 247.2L146.2 245.4L146.5 246.9L146.8 246.5L147.2 239.2L147.5 246.3L147.8 248.3L148.2 240.7L148.5 247.8L148.8 247.6L149.2 245.4L149.5 245.7L149.8 250L150.2 250.7L150.5 243.9L150.8 244L151.2 248.4L151.5 246.3L151.8 246.4L152.2 243.5L152.5 247.8L152.8 252.5L153.2 246.7L153.5 244.2L153.8 239.4L154.2 235.3L154.5 232.5L154.8 227.4L155.2 223.5L155.5 224.3L155.8 224.1L156.2 224L156.5 223.5L156.8 223.9L157.2 226.6L157.5 225.9L157.8 224.9L158.2 221.3L158.5 223.4L158.8 223.4L159.2 219.3L159.5 219.7L159.8 220.5L160.2 219.1L160.5 219.9L160.8 219.3L161.2 219.5L161.5 221.5L161.8 221.1L162.2 223L162.5 222.9L162.8 223.8L163.2 222.6L163.5 225.3L163.8 225.6L164.2 226.1L164.5 230.1L164.8 231L165.2 233.7L165.5 232.9L165.8 236.6L166.2 233L166.5 231.9L166.8 231.8L167.2 233.8L167.5 237.1L167.8 234.1L168.2 234.6L168.5 235.9L168.8 236.9L169.2 237.4L169.5 238.8L169.8 239.4L170.2 241.2L170.5 242.1L170.8 241.5L171.2 239.8L171.5 239L171.8 239.4L172.2 239.6L172.5 243L172.8 242.1L173.2 243.3L173.5 242.8L173.8 242.2L174.2 241.6L174.5 239.9L174.8 236.7L175.2 234L175.5 234.9L175.8 234.2L176.2 235.7L176.5 237.6L176.8 239.7L177.2 241.1L177.5 242.5L177.8 242.6L178.2 240.3L178.5 243.7L178.8 243.9L179.2 238.3L179.5 240.7L179.8 242.3L180.2 244.5L180.5 242.4L180.8 244.5L181.2 245L181.5 246.7L181.8 245.4L182.2 244.1L182.5 243.6L182.8 244.3L183.2 242.4L183.5 243.7L183.8 241.8L184.2 239.8L184.5 239.8L184.8 237.4L185.2 239.6L185.5 238.8L185.8 235.9L186.2 235.1L186.5 234.4L186.8 233.8L187.2 234.3L187.5 232.9L187.8 233.8L188.2 232.3L188.5 234.6L188.8 236L189.2 235.3L189.5 236.5L189.8 236.9L190.2 237.7L190.5 236.1L190.8 236.6L191.2 238.5L191.5 237.6L191.8 239.7L192.2 241.5L192.5 239.5L192.8 241.8L193.2 243.5L193.5 244.8L193.8 240.3L194.2 239.5L194.5 238.3L194.8 237.2L195.2 235.1L195.5 234.2L195.8 234.3L196.2 232.5L196.5 227.9L196.8 234.5L197.2 234.2L197.5 234.8L197.8 233.2L198.2 234.2L198.5 230.1L198.8 229.8L199.2 227.7L199.5 226.8L199.8 230L200.2 229.3L200.5 233.6L200.8 233.4L201.2 236.2L201.5 235.3L201.8 231.9L202.2 236.9L202.5 233.6L202.8 235.1L203.2 233.1L203.5 233.7L203.8 233.2L204.2 237.8L204.5 237.5L204.8 238.3L205.2 243L205.5 243.7L205.8 243.3L206.2 245.4L206.5 241.6L206.8 236.6L207.2 242.9L207.5 242.3L207.8 243.5L208.2 240.2L208.5 242.2L208.8 239.9L209.2 240.2L209.5 238.1L209.8 239.4L210.2 238.5L210.5 231.7L210.8 232.8L211.2 239.3L211.5 236.2L211.8 236.2L212.2 238L212.5 238.4L212.8 238.5L213.2 239.2L213.5 241.7L213.8 240.3L214.2 238.5L214.5 239.4L214.8 238.9L215.2 237L215.5 233.9L215.8 237.5L216.2 237.2L216.5 235.9L216.8 237.6L217.2 236L217.5 235.9L217.8 239.9L218.2 238.9L218.5 234.2L218.8 240.7L219.2 235.9L219.5 236.9L219.8 239L220.2 237.6L220.5 238.2L220.8 241.8L221.2 243.9L221.5 244.3L221.8 246L222.2 243L222.5 241.2L222.8 245.7L223.2 244.7L223.5 246.8L223.8 244.3L224.2 249.9L224.5 248.9L224.8 251.2L225.2 252.4L225.5 255.4L225.8 254L226.2 245.8L226.5 251.4L226.8 247.3L227.2 248.4L227.5 247.9L227.8 248L228.2 248.7L228.5 247L228.8 248.4L229.2 251.9L229.5 249.2L229.8 248L230.2 250.8L230.5 245.1L230.8 245.5L231.2 242.8L231.5 241.3L231.8 240L232.2 239.3L232.5 242.9L232.8 243.4L233.2 244.7L233.5 245.1L233.8 242.6L234.2 243.9L234.5 242.2L234.8 239.8L235.2 239.7L235.5 241.5L235.8 241.3L236.2 238.8L236.5 240.5L236.8 242.6L237.2 242.1L237.5 240.7L237.8 242.1L238.2 239.6L238.5 240.3L238.8 237.9L239.2 234.3L239.5 235.5L239.8 237.9L240.2 237.3L240.5 239.7L240.8 238.5L241.2 242.4L241.5 242.9L241.8 241.8L242.2 243.5L242.5 245.2L242.8 243.4L243.2 241.2L243.5 241.3L243.8 243.9L244.2 243.5L244.5 248.4L244.8 246.9L245.2 249.8L245.5 248.6L245.8 249.7L246.2 249.9L246.5 251.1L246.8 249.9L247.2 248.7L247.5 246.8L247.8 249.2L248.2 252L248.5 249.1L248.8 258.4L249.2 256.5L249.5 254.8L249.8 255.3L250.2 251.9L250.5 248.8L250.8 247.5L251.2 244.9L251.5 240.9L251.8 240.2L252.2 237.3L252.5 237.4L252.8 235L253.2 236.1L253.5 232.7L253.8 230L254.2 226.8L254.5 230.5L254.8 228.7L255.2 228.3L255.5 230.8L255.8 230L256.2 233.5L256.5 234.9L256.8 233.4L257.2 237L257.5 237L257.8 235.5L258.2 236.1L258.5 233.5L258.8 236.5L259.2 239.3L259.5 237.2L259.8 239.8L260.2 238.6L260.5 242.6L260.8 241.1L261.2 243.3L261.5 246.3L261.8 246.7L262.2 243.9L262.5 242.7L262.8 245.7L263.2 241.8L263.5 240.1L263.8 237L264.2 241.6L264.5 239.8L264.8 241.3L265.2 240.4L265.5 239L265.8 237L266.2 237.3L266.5 237L266.8 234.1L267.2 227.9L267.5 230.9L267.8 235.9L268.2 229.4L268.5 239.8L268.8 242.1L269.2 243.7L269.5 248.7L269.8 247.3L270.2 247.5L270.5 245.9L270.8 246.1L271.2 245L271.5 246.2L271.8 247.8L272.2 249.4L272.5 253.1L272.8 255.6L273.2 257.4L273.5 257.1L273.8 255L274.2 253.5L274.5 251.4L274.8 247L275.2 246.9L275.5 244.7L275.8 244.1L276.2 244L276.5 242L276.8 244.2L277.2 239.8L277.5 241.1L277.8 237.6L278.2 236.5L278.5 234.3L278.8 234.5L279.2 235.8L279.5 233.4L279.8 236.7L280.2 236L280.5 236L280.8 240.8L281.2 241L281.5 241.2L281.8 234.5L282.2 240.7L282.5 240.1L282.8 237.8L283.2 235.8L283.5 235.1L283.8 233.9L284.2 231.9L284.5 228.4L284.8 230.2L285.2 228.5L285.5 225.2L285.8 227.7L286.2 223.2L286.5 223.2L286.8 222L287.2 223.9L287.5 223.8L287.8 223.6L288.2 224.6L288.5 225.7L288.8 229L289.2 229.4L289.5 231.4L289.8 229.4L290.2 231.4L290.5 229.2L290.8 231.1L291.2 231.2L291.5 226.7L291.8 229.5L292.2 233.1L292.5 229.2L292.8 230.7L293.2 232.4L293.5 231.7L293.8 231.2L294.2 233.6L294.5 234.2L294.8 229.4L295.2 231.3L295.5 233.3L295.8 232.5L296.2 231.3L296.5 230.1L296.8 233.9L297.2 233.9L297.5 231.6L297.8 227.8L298.2 232.8L298.5 225.1L298.8 226L299.2 224.1L299.5 221.4L299.8 223.7L300.2 224.4L300.5 228.1L300.8 226.9L301.2 232L301.5 232.9L301.8 231L302.2 230.1L302.5 230.8L302.8 215.6L303.2 218.6L303.5 230.9L303.8 233.3L304.2 237.4L304.5 239.7L304.8 241.6L305.2 242.1L305.5 244.2L305.8 244L306.2 245.9L306.5 245.2L306.8 240L307.2 240.2L307.5 234.3L307.8 231L308.2 232L308.5 234L308.8 233.5L309.2 230.8L309.5 230.5L309.8 228.8L310.2 227.8L310.5 229.6L310.8 228.3L311.2 229L311.5 225L311.8 225.1L312.2 228.9L312.5 225.8L312.8 227.3L313.2 226.1L313.5 228.1L313.8 227.8L314.2 222.5L314.5 201.8L314.8 204.8L315.2 220.8L315.5 219.8L315.8 220.8L316.2 222.4L316.5 222.6L316.8 223.6L317.2 226.3L317.5 229.9L317.8 224.8L318.2 226.7L318.5 226.5L318.8 226.3L319.2 223L319.5 221.9L319.8 225.3L320.2 222.8L320.5 221.6L320.8 226L321.2 224.3L321.5 226.8L321.8 222.4L322.2 213.6L322.5 226.1L322.8 224.2L323.2 221.9L323.5 224.8L323.8 221.5L324.2 221.9L324.5 227.1L324.8 226.1L325.2 227.2L325.5 230.5L325.8 196L326.2 199L326.5 227.8L326.8 225.8L327.2 224.4L327.5 226.3L327.8 226L328.2 226.7L328.5 234.8L328.8 228.3L329.2 226.9L329.5 233.8L329.8 229.7L330.2 234.7L330.5 230.2L330.8 230.1L331.2 227.7L331.5 231L331.8 232L332.2 230.6L332.5 233.5L332.8 234.8L333.2 231.5L333.5 233.7L333.8 228.9L334.2 233.9L334.5 232.5L334.8 227.9L335.2 227.9L335.5 225.5L335.8 229.9L336.2 228.6L336.5 228.3L336.8 232.1L337.2 226.7L337.5 200L337.8 203L338.2 232.1L338.5 225.2L338.8 225.9L339.2 227.6L339.5 221.7L339.8 222.9L340.2 228.8L340.5 223.2L340.8 224.8L341.2 229.1L341.5 228.9L341.8 229.5L342.2 225.4L342.5 226L342.8 222.1L343.2 220.3L343.5 217.8L343.8 220.2L344.2 219.2L344.5 224.2L344.8 224.8L345.2 221.4L345.5 220.5L345.8 223.2L346.2 222.7L346.5 217.5L346.8 220L347.2 211.3L347.5 218.1L347.8 219.2L348.2 214.4L348.5 215L348.8 220.3L349.2 223.6L349.5 218.7L349.8 204.9L350.2 221L350.5 212.1L350.8 213.6L351.2 215.3L351.5 211L351.8 213L352.2 215.5L352.5 213.7L352.8 216.1L353.2 217.7L353.5 215.7L353.8 221.3L354.2 207.1L354.5 210.8L354.8 215.4L355.2 215.9L355.5 210.9L355.8 213.3L356.2 222.7L356.5 216L356.8 221.2L357.2 221.2L357.5 225.5L357.8 219.6L358.2 221.2L358.5 207.9L358.8 218.2L359.2 221.6L359.5 217.7L359.8 199L360.2 202L360.5 224.2L360.8 222.5L361.2 216.3L361.5 233.8L361.8 238.9L362.2 228.2L362.5 228.3L362.8 233.6L363.2 230L363.5 238.3L363.8 229.7L364.2 236.3L364.5 236.3L364.8 229.9L365.2 236.2L365.5 233.8L365.8 232.6L366.2 226L366.5 205.9L366.8 224.8L367.2 222.4L367.5 219.2L367.8 217.7L368.2 221.4L368.5 216.6L368.8 222.9L369.2 217.9L369.5 219.3L369.8 217.8L370.2 215.7L370.5 221.7L370.8 162.5L371.2 165.5L371.5 211.7L371.8 209.2L372.2 209.2L372.5 217L372.8 216.3L373.2 215.1L373.5 212.6L373.8 217.4L374.2 213.3L374.5 211.5L374.8 214.8L375.2 214L375.5 213.2L375.8 213.3L376.2 208L376.5 209L376.8 211.4L377.2 211.1L377.5 209.2L377.8 217.5L378.2 208.4L378.5 209.5L378.8 206.4L379.2 209.2L379.5 202.8L379.8 211.1L380.2 207.7L380.5 204.8L380.8 204L381.2 205.5L381.5 201.9L381.8 211L382.2 208.8L382.5 162.5L382.8 165.5L383.2 212.5L383.5 158.8L383.8 161.8L384.2 215.5L384.5 200.3L384.8 206L385.2 205.7L385.5 200.6L385.8 203.3L386.2 209.4L386.5 208.5L386.8 196.1L387.2 210.5L387.5 208.4L387.8 208.9L388.2 212.8L388.5 213.2L388.8 212L389.2 208.9L389.5 214.3L389.8 217.2L390.2 207.6L390.5 215.1L390.8 212.4L391.2 212L391.5 176L391.8 179L392.2 208L392.5 211.6L392.8 210.1L393.2 209.2L393.5 205.8L393.8 152.5L394.2 155.5L394.5 206.1L394.8 210.2L395.2 210.7L395.5 212.2L395.8 206.4L396.2 206L396.5 205.5L396.8 171.6L397.2 174.6L397.5 207.8L397.8 209.8L398.2 204.4L398.5 208.5L398.8 208.9L399.2 204.5L399.5 206.2L399.8 204.8L400.2 194.6L400.5 158.8L400.8 161.8L401.2 191.5L401.5 190.8L401.8 193.2L402.2 190.4L402.5 189.3L402.8 189.4L403.2 184.7L403.5 180.3L403.8 180.4L404.2 188.5L404.5 189.7L404.8 187.6L405.2 188.3L405.5 189.2L405.8 155L406.2 158L406.5 183.6L406.8 179.4L407.2 176.2L407.5 174L407.8 175.8L408.2 178.4L408.5 172.7L408.8 166.6L409.2 172.7L409.5 177.2L409.8 172.3L410.2 172.9L410.5 164.6L410.8 150L411.2 153L411.5 154.6L411.8 161.8L412.2 163.9L412.5 157L412.8 156L413.2 156.5L413.5 160.3L413.8 153.8L414.2 142.4L414.5 148.4L414.8 139.7L415.2 145.5L415.5 135.8L415.8 144.2L416.2 148.7L416.5 149.4L416.8 145.4L417.2 143.5L417.5 139.5L417.8 144.9L418.2 147L418.5 143.9L418.8 135.7L419.2 134L419.5 141.9L419.8 141.3L420.2 141.1L420.5 148.7L420.8 141.9L421.2 152.7L421.5 155.5L421.8 158.7L422.2 158.7L422.5 155.7L422.8 156.9L423.2 161.8L423.5 156.8L423.8 155.8L424.2 169.1L424.5 165.2L424.8 171.9L425.2 165.2L425.5 164.3L425.8 165.6L426.2 163.2L426.5 177.6L426.8 168.9L427.2 167.9L427.5 145L427.8 148L428.2 173.7L428.5 182.2L428.8 169.4L429.2 180.4L429.5 188.7L429.8 189.8L430.2 184.3L430.5 186.1L430.8 170L431.2 173L431.5 173.3L431.8 189.1L432.2 191.1L432.5 188.6L432.8 190.3L433.2 188.8L433.5 193.3L433.8 158.8L434.2 161.8L434.5 189.5L434.8 195.5L435.2 189.6L435.5 192.3L435.8 196.8L436.2 193L436.5 197.7L436.8 194.2L437.2 201.7L437.5 202.7L437.8 200.6L438.2 193.7L438.5 199.4L438.8 155L439.2 158L439.5 194.3L439.8 199.6L440.2 184.5L440.5 203.7L440.8 201.4L441.2 202.3L441.5 195.6L441.8 170L442.2 173L442.5 209.5L442.8 201.5L443.2 197.4L443.5 200.9L443.8 197.8L444.2 210.5L444.5 201.4L444.8 198.6L445.2 211.3L445.5 199.5L445.8 206.4L446.2 202.5L446.5 199.6L446.8 196.2L447.2 196.4L447.5 193.2L447.8 184.2L448.2 199.9L448.5 199.7L448.8 203.8L449.2 200.1L449.5 209.4L449.8 212.1L450.2 203.7L450.5 208.4L450.8 155L451.2 158L451.5 213.2L451.8 213.5L452.2 213.9L452.5 216.6L452.8 210.7L453.2 215.6L453.5 213L453.8 218.2L454.2 213L454.5 211.5L454.8 213.2L455.2 213.7L455.5 202L455.8 211.7L456.2 214.1L456.5 217.7L456.8 214.8L457.2 220.5L457.5 214.3L457.8 213.4L458.2 218.1L458.5 207.2L458.8 209.9L459.2 215.3L459.5 216.1L459.8 208.9L460.2 218.1L460.5 217.8L460.8 217.2L461.2 217.5L461.5 216.5L461.8 216L462.2 214.2L462.5 162.5L462.8 165.5L463.2 206L463.5 205.8L463.8 213.5L464.2 205.5L464.5 210.5L464.8 211.6L465.2 217.9L465.5 216.6L465.8 219.2L466.2 208L466.5 215.3L466.8 212L467.2 216.4L467.5 214.1L467.8 220.5L468.2 220.7L468.5 227.4L468.8 229.3L469.2 228.3L469.5 231.3L469.8 232.7L470.2 235.8L470.5 227.9L470.8 230.8L471.2 235.1L471.5 234.9L471.8 230.9L472.2 232.2L472.5 232.8L472.8 231.7L473.2 228.1L473.5 232.9L473.8 229.3L474.2 231.4L474.5 224.3L474.8 197.5L475.2 200.5L475.5 226.7L475.8 232.3L476.2 224.4L476.5 224.6L476.8 221.2L477.2 223.8L477.5 221.3L477.8 229.3L478.2 209.3L478.5 217.7L478.8 217.5L479.2 214.3L479.5 212.5L479.8 216.8L480.2 217.6L480.5 222.3L480.8 216.8L481.2 218.5L481.5 219L481.8 220L482.2 214.7L482.5 220.4L482.8 212.3L483.2 210L483.5 195.6L483.8 213.4L484.2 208.9L484.5 201.7L484.8 212.5L485.2 213L485.5 213.3L485.8 212.8L486.2 213.5L486.5 209.6L486.8 206.7L487.2 202.7L487.5 212.4L487.8 216.3L488.2 215.9L488.5 222.1L488.8 222.7L489.2 217.8L489.5 224.6L489.8 220.9L490.2 219.5L490.5 219.6L490.8 217.3L491.2 218.7L491.5 215.6L491.8 214.6L492.2 216.7L492.5 213.9L492.8 216.3L493.2 216.1L493.5 219.3L493.8 217.4L494.2 215.3L494.5 217.9L494.8 218.3L495.2 213.1L495.5 210.1L495.8 200L496.2 203L496.5 214.1L496.8 209.9L497.2 223.4L497.5 223.7L497.8 220.9L498.2 222.3L498.5 206.1L498.8 224.3L499.2 222L499.5 218.7L499.8 222.5L500.2 225.8L500.5 226.1L500.8 226.1L501.2 232.1L501.5 230.3L501.8 234.5L502.2 230.2L502.5 234.7L502.8 232L503.2 233.4L503.5 238.9L503.8 237.2L504.2 236.6L504.5 234.7L504.8 235.8L505.2 235.2L505.5 227.8L505.8 231.3L506.2 230.2L506.5 231.1L506.8 225.6L507.2 220.4L507.5 197.5L507.8 200.5L508.2 223.9L508.5 220.7L508.8 225.7L509.2 223.7L509.5 226.8L509.8 227.2L510.2 223.2L510.5 222.6L510.8 222.8L511.2 227.3L511.5 215.4L511.8 226.5L512.2 228.2L512.5 218.2L512.8 229.7L513.2 235.1L513.5 232L513.8 234.9L514.2 232.4L514.5 231.7L514.8 238.8L515.2 233L515.5 237.7L515.8 233L516.2 232.1L516.5 231.5L516.8 234.9L517.2 232.4L517.5 233.9L517.8 232.6L518.2 220.2L518.5 225.9L518.8 224.8L519.2 226.1L519.5 199.5L519.8 202.5L520.2 224.3L520.5 223.8L520.8 227.9L521.2 231.7L521.5 228.3L521.8 229.9L522.2 232L522.5 229.8L522.8 230.3L523.2 225.9L523.5 227.9L523.8 231.2L524.2 232.6L524.5 228.9L524.8 232.6L525.2 235.7L525.5 233.1L525.8 236.4L526.2 233.8L526.5 234.1L526.8 231.7L527.2 232.7L527.5 237.5L527.8 235.1L528.2 239.6L528.5 238.6L528.8 237.3L529.2 239.4L529.5 242.6L529.8 242.2L530.2 239.6L530.5 240.7L530.8 237.3L531.2 238.9L531.5 238.5L531.8 215.6L532.2 218.6L532.5 237.7L532.8 238.7L533.2 240.5L533.5 238.6L533.8 241.4L534.2 235.2L534.5 235.4L534.8 232.9L535.2 232.1L535.5 228.4L535.8 229.4L536.2 232.7L536.5 234.8L536.8 233.8L537.2 236.5L537.5 237.5L537.8 235.7L538.2 234.4L538.5 231.4L538.8 231.9L539.2 223.1L539.5 227.8L539.8 230.5L540.2 232.8L540.5 231L540.8 232.1L541.2 233.9L541.5 234.7L541.8 228L542.2 227.3L542.5 219.6L542.8 220.4L543.2 218.4L543.5 214.7L543.8 215.4L544.2 217L544.5 221.7L544.8 220.5L545.2 221.6L545.5 223L545.8 225.7L546.2 224.7L546.5 223.8L546.8 221.9L547.2 217.9L547.5 222.9L547.8 225.7L548.2 226.9L548.5 228.7L548.8 228.9L549.2 228.5L549.5 229.5L549.8 232.7L550.2 233.1L550.5 233.6L550.8 234.2L551.2 233.2L551.5 233.9L551.8 239L552.2 239.2L552.5 238.3L552.8 242.1L553.2 244.1L553.5 244L553.8 241.1L554.2 243.2L554.5 241L554.8 241.7L555.2 239.7L555.5 239.9L555.8 241.2L556.2 242.3L556.5 240.3L556.8 244.4L557.2 244.5L557.5 245.5L557.8 242.8L558.2 245.3L558.5 245.1L558.8 243.6L559.2 242.8L559.5 240.9L559.8 241.4L560.2 243.4L560.5 245L560.8 248.3L561.2 249.3L561.5 247.3L561.8 246.2L562.2 245.3L562.5 242.7L562.8 240.6L563.2 241.9L563.5 238.6L563.8 237.6L564.2 239.4L564.5 239.8L564.8 239L565.2 239.2L565.5 243L565.8 238L566.2 237.7L566.5 238.5L566.8 235.4L567.2 237.5L567.5 236.7L567.8 232.1L568.2 238.8L568.5 239.6L568.8 236.9L569.2 236.3L569.5 242.5L569.8 240.8L570.2 242.5L570.5 237.3L570.8 235.4L571.2 237.5L571.5 237.4L571.8 238.7L572.2 237.4L572.5 237.9L572.8 237.2L573.2 237.2L573.5 237.7L573.8 234.8L574.2 235.1L574.5 226.3L574.8 233.1L575.2 233.3L575.5 232.5L575.8 232L576.2 231.6L576.5 232.1L576.8 233.3L577.2 231L577.5 232.9L577.8 233.3L578.2 232.2L578.5 230.3L578.8 230.2L579.2 226.2L579.5 225.9L579.8 226.2L580.2 226.4L580.5 226.3L580.8 229.2L581.2 227.2L581.5 229.5L581.8 230L582.2 228.8L582.5 225.5L582.8 228.2L583.2 232.9L583.5 237.2L583.8 242.6L584.2 241.8L584.5 249.2L584.8 256.9L585.2 259.8L585.5 258.9L585.8 257.5L586.2 255.4L586.5 251.8L586.8 252.4L587.2 251.3L587.5 250.6L587.8 249.5L588.2 248.9L588.5 248.9L588.8 249.5L589.2 248.8L589.5 248.9L589.8 247.5L590.2 245L590.5 245.5L590.8 243.7L591.2 243.4L591.5 240.8L591.8 240.4L592.2 242.6L592.5 242.7L592.8 243.1L593.2 240.6L593.5 243.3L593.8 239.4L594.2 241L594.5 238.9L594.8 238.4L595.2 234.6L595.5 233.6L595.8 235.7L596.2 232.4L596.5 237.1L596.8 240.7L597.2 241.1L597.5 240.4L597.8 239.4L598.2 240.9L598.5 239.5L598.8 241L599.2 240.1L599.5 236.9L599.8 241.8L600.2 243.5L600.5 241L600.8 243.7L601.2 241.8L601.5 243L601.8 245.1L602.2 241.7L602.5 241.8L602.8 242.7L603.2 242.2L603.5 241.6L603.8 243.4L604.2 242.1L604.5 243.8L604.8 244.1L605.2 245L605.5 248.4L605.8 247L606.2 245.9L606.5 246.9L606.8 246.3L607.2 245.6L607.5 248.2L607.8 249.6L608.2 249.7L608.5 248.6L608.8 249.9L609.2 252.1L609.5 253.3L609.8 248.6L610.2 249.9L610.5 248L610.8 245.7L611.2 242.3L611.5 241.1L611.8 239.8L612.2 242.5L612.5 241.5L612.8 243.4L613.2 242L613.5 243.1L613.8 240.2L614.2 238.9L614.5 236.7L614.8 237.1L615.2 237.9L615.5 234.8L615.8 236.1L616.2 236.3L616.5 236.1L616.8 238L617.2 238.6L617.5 239.7L617.8 237.2L618.2 236.4L618.5 235.5L618.8 235.8L619.2 236.4L619.5 235.4L619.8 232.9L620.2 234.7L620.5 233.2L620.8 235.5L621.2 235.4L621.5 234.4L621.8 231.8L622.2 227.1L622.5 233.2L622.8 234.4L623.2 234.2L623.5 231L623.8 235.9L624.2 236.7L624.5 237.6L624.8 238.1L625.2 238L625.5 241.6L625.8 243.9L626.2 242.2L626.5 241L626.8 240.5L627.2 241.3L627.5 239.6L627.8 243.4L628.2 245.2L628.5 244.8L628.8 246.7L629.2 248.4L629.5 244.3L629.8 244.1L630.2 244.6L630.5 241.3L630.8 242.3L631.2 237.2L631.5 235.5L631.8 238.3L632.2 237.1L632.5 238.7L632.8 239.5L633.2 237.6L633.5 236.1L633.8 237.1L634.2 235.4L634.5 234.7L634.8 233.8L635.2 230.9L635.5 228.2L635.8 229.5L636.2 229.3L636.5 230.2L636.8 233.8L637.2 232L637.5 234.7L637.8 229.7L638.2 233.3L638.5 234.4L638.8 234.5L639.2 232.6L639.5 235.5L639.8 236.4L640.2 236.9L640.5 240.7L640.8 238.5L641.2 243.6L641.5 245.1L641.8 242.9L642.2 241.5L642.5 241.7L642.8 240.3L643.2 236.2L643.5 234.8L643.8 238L644.2 235.5L644.5 234.2L644.8 235.3L645.2 237.8L645.5 234.2L645.8 233.8L646.2 234.6L646.5 231.4L646.8 233.3L647.2 230.4L647.5 232.8L647.8 234.4L648.2 236L648.5 237.4L648.8 234.9L649.2 244.3L649.5 245.2L649.8 247.7L650.2 250L650.5 248.1L650.8 242.4L651.2 247.6L651.5 245.9L651.8 245.6L652.2 248.3L652.5 245.8L652.8 246.9L653.2 247.8L653.5 251L653.8 247.8L654.2 246.5L654.5 244L654.8 244L655.2 242.3L655.5 241.5L655.8 241.2L656.2 240.8L656.5 243.1L656.8 240.7L657.2 245.8L657.5 236.1L657.8 239.3L658.2 239.5L658.5 238L658.8 233.8L659.2 234.7L659.5 229.1L659.8 230.6L660.2 230.2L660.5 231.1L660.8 231.8L661.2 228.1L661.5 229.3L661.8 228.8L662.2 225.3L662.5 223.4L662.8 222.1L663.2 223L663.5 227.1L663.8 230.3L664.2 235L664.5 237.2L664.8 239.5L665.2 245.5L665.5 248.5L665.8 247.1L666.2 244.6L666.5 243.5L666.8 240.8L667.2 238.1L667.5 241.1L667.8 232.6L668.2 237.3L668.5 234.4L668.8 228.7L669.2 234.2L669.5 232L669.8 231L670.2 230.2L670.5 227.1L670.8 223.5L671.2 221.9L671.5 217.7L671.8 220L672.2 222.6L672.5 219.7L672.8 217.3L673.2 223.4L673.5 222.8L673.8 225.9L674.2 225.2L674.5 223.3L674.8 227.7L675.2 226.8L675.5 224.5L675.8 224.3L676.2 227.9L676.5 227.9L676.8 232.3L677.2 232.3L677.5 233.9L677.8 232.4L678.2 232.6L678.5 233.7L678.8 234.6L679.2 235.8L679.5 235.4L679.8 239.1L680.2 239L680.5 240.2L680.8 243.8L681.2 245.2L681.5 246.7L681.8 245.8L682.2 246.9L682.5 245.7L682.8 245L683.2 243.9L683.5 244.6L683.8 243.1L684.2 246L684.5 246.9L684.8 247.2L685.2 248.4L685.5 249.2L685.8 248.5L686.2 251L686.5 247.4L686.8 247L687.2 250.2L687.5 248.2L687.8 250.1L688.2 249.2L688.5 248L688.8 250.8L689.2 251.1L689.5 248.3L689.8 249.5L690.2 249.4L690.5 245.2L690.8 248.1L691.2 245.7L691.5 245.4L691.8 245.4L692.2 241.9L692.5 246.6L692.8 245.4L693.2 247.7L693.5 251L693.8 243.9L694.2 249.3L694.5 247.1L694.8 246.5L695.2 248.1L695.5 246.9L695.8 245.9L696.2 246.4L696.5 250L696.8 246.9L697.2 248.1L697.5 247L697.8 247.5L698.2 247.8L698.5 248.8L698.8 246L699.2 245.9L699.5 246.9L699.8 245.3L700.2 249.8L700.5 250.5L700.8 248.7L701.2 249.8L701.5 250.9L701.8 251.6L702.2 248.5L702.5 247.9L702.8 244.4L703.2 246.5L703.5 244.5L703.8 243.1L704.2 247L704.5 244.1L704.8 249.3L705.2 250.9L705.5 246.9L705.8 244.9L706.2 250.3L706.5 248.7L706.8 254.9L707.2 255.2L707.5 257L707.8 259.9L708.2 240.3L708.5 242.5L708.8 258.4L709.2 243.1L709.5 246.9L709.8 250.4L710.2 242.5L710.5 256.2L710.8 249.8L711.2 242.8L711.5 242.5L711.8 255.6L712.2 255.5L712.5 257.6L712.8 251.3L713.2 256L713.5 251.7L713.8 238L714.2 241L714.5 248.1L714.8 258.2L715.2 252.4L715.5 260.5L715.8 258.7L716.2 242.3L716.5 242L716.8 256.2L717.2 253.9L717.5 244.4L717.8 240L718.2 243L718.5 244.9L718.8 240.6L719.2 247.9L719.5 234L719.8 241.2L720.2 244.4L720.5 244.1L720.8 242.1L721.2 265.2L721.5 257.5L721.8 254.7L722.2 268.2L722.5 276.7L722.8 279.9L723.2 287.9L723.5 288.4L723.8 296L724.2 299.1L724.5 302.2L724.8 306.1L725.2 310.2L725.5 314.4L725.8 316.6L726.2 320.7L726.5 325.3L726.8 334L727.2 336.3L727.5 329.2L727.8 322.7L728.2 320.8L728.5 325.5L728.8 328.4L729.2 331.3L729.5 335.1L729.8 336.8L730.2 341.7L730.5 342.5L730.8 348.5L731.2 356.8L731.5 357.1L731.8 356.8L732.2 357.6L732.5 359.1L732.8 355.3L733.2 359.1L733.5 358L733.8 359.8L734.2 356.8L734.5 358.5L734.8 360.8L735.2 362.2L735.5 363.7L735.8 360.3L736.2 368.6L736.5 373L736.8 380.2L737.2 383.2L737.5 374.2L737.8 372L738.2 371.8L738.5 366L738.8 369.8L739.2 365.4L739.5 366.7L739.8 367.4L740.2 367.3L740.5 366.8L740.8 365.9L741.2 367.1L741.5 373.6L741.8 370.8L742.2 378.7L742.5 384.2L742.8 379.4L743.2 378L743.5 374.3L743.8 368.8L744.2 367.2L744.5 364.3L744.8 367.7L745.2 363.8L745.5 367.1L745.8 366.7L746.2 369.8L746.5 368.8L746.8 365.3L747.2 368L747.5 372.7L747.8 376.1L748.2 381.4L748.5 384.9L748.8 377.8L749.2 372.9L749.5 375L749.8 372.4L750.2 367.9L750.5 364L750.8 369.8L751.2 367.8L751.5 369L751.8 365.4L752.2 364L752.5 367.8L752.8 364.5L753.2 369.8L753.5 374.3L753.8 372.2L754.2 373.7L754.5 376.4L754.8 376.9L755.2 379L755.5 373.8L755.8 370.4L756.2 365.5L756.5 363.8L756.8 363.7L757.2 363.3L757.5 369.4L757.8 365.1L758.2 363.5L758.5 368.3L758.8 368.9L759.2 371.3L759.5 377.3L759.8 377.3L760.2 378.6L760.5 379L760.8 377.5L761.2 369.7L761.5 367.6L761.8 366.4L762.2 367.2L762.5 368.1L762.8 367.1L763.2 365.2L763.5 370L763.8 365.8L764.2 367.7L764.5 374.5L764.8 372L765.2 380.2L765.5 379L765.8 377L766.2 376.1L766.5 374.4L766.8 367.3L767.2 364.2L767.5 368L767.8 366.2L768.2 366.8L768.5 370L768.8 368.4L769.2 364.9L769.5 369.9L769.8 365.5L770.2 369.1L770.5 372.5L770.8 374.9L771.2 380.8L771.5 380.4L771.8 376L772.2 376.5L772.5 369.3L772.8 369.9L773.2 366.8L773.5 364.2L773.8 367.1L774.2 368.3L774.5 365.1L774.8 369.1L775.2 363.7L775.5 364.3L775.8 363.5L776.2 370.3L776.5 375.2L776.8 377.5L777.2 378.6L777.5 377.9L777.8 377.9L778.2 377.1L778.5 368.5L778.8 366.8L779.2 363.8L779.5 365.2L779.8 367.6L780.2 368.4L780.5 367.5" stroke="#1d82cf"/>
<path d="M55.5 276L55.8 284.4L56.2 275.3L56.5 275.2L56.8 277.2L57.2 275.8L57.5 281L57.8 274.4L58.2 283.8L58.5 283.3L58.8 273L59.2 279.5L59.5 274.3L59.8 276.1L60.2 278L60.5 278.4L60.8 278.6L61.2 284.1L61.5 276.1L61.8 275.3L62.2 281L62.5 284.4L62.8 284.1L63.2 283.6L63.5 273.8L63.8 284.2L64.2 286.7L64.5 283.5L64.8 277.9L65.2 275.6L65.5 282.5L65.8 280.9L66.2 282.3L66.5 275.4L66.8 274.6L67.2 282.2L67.5 273.2L67.8 284.3L68.2 274.6L68.5 280.2L68.8 278L69.2 276.9L69.5 275L69.8 282.4L70.2 286.5L70.5 281.7L70.8 285.8L71.2 281.5L71.5 286.6L71.8 279.7L72.2 283.9L72.5 276.4L72.8 275.7L73.2 284.4L73.5 284.3L73.8 278.7L74.2 282.6L74.5 281.9L74.8 284.4L75.2 274L75.5 283.8L75.8 279L76.2 278.4L76.5 281.2L76.8 280.4L77.2 278.2L77.5 276.5L77.8 284L78.2 282.8L78.5 274.2L78.8 277.9L79.2 282.2L79.5 285.7L79.8 284.5L80.2 275.9L80.5 283.7L80.8 281.3L81.2 273.8L81.5 275.5L81.8 275.3L82.2 273.9L82.5 281.2L82.8 276.7L83.2 281.3L83.5 274L83.8 287.2L84.2 281.3L84.5 282.4L84.8 280.3L85.2 278.5L85.5 275.3L85.8 284.3L86.2 274.7L86.5 279.3L86.8 274.5L87.2 274.3L87.5 281.4L87.8 283.7L88.2 278.5L88.5 282.5L88.8 283.3L89.2 279.4L89.5 282.3L89.8 276.5L90.2 274.8L90.5 275.3L90.8 273.1L91.2 273.9L91.5 282L91.8 283.8L92.2 273.7L92.5 281.7L92.8 282.3L93.2 281.2L93.5 279L93.8 278.8L94.2 281.3L94.5 275.9L94.8 282L95.2 275.3L95.5 273.4L95.8 284.2L96.2 274.1L96.5 275.4L96.8 273.7L97.2 273.1L97.5 274.5L97.8 284.1L98.2 281.3L98.5 277.9L98.8 273.1L99.2 282.9L99.5 278.8L99.8 283.2L100.2 279.1L100.5 273.9L100.8 273.9L101.2 282.5L101.5 271.2L101.8 274.8L102.2 277.9L102.5 276.1L102.8 276.3L103.2 282.5L103.5 278.6L103.8 284.9L104.2 274.2L104.5 276.5L104.8 283.6L105.2 278.2L105.5 282.2L105.8 278.2L106.2 277.9L106.5 283.6L106.8 276.8L107.2 279.6L107.5 279.8L107.8 273.5L108.2 274L108.5 275.1L108.8 272L109.2 278.9L109.5 277.2L109.8 274.2L110.2 274.4L110.5 270.3L110.8 273.1L111.2 276.1L111.5 268L111.8 271.9L112.2 270.1L112.5 263.6L112.8 261.4L113.2 258L113.5 259.6L113.8 256.5L114.2 253.1L114.5 252.9L114.8 251.1L115.2 255.8L115.5 251.9L115.8 238L116.2 242L116.5 245.3L116.8 246.5L117.2 239.6L117.5 234.8L117.8 233.8L118.2 231.7L118.5 233.7L118.8 242.2L119.2 234.9L119.5 239.9L119.8 241.2L120.2 234.9L120.5 242.4L120.8 226L121.2 230L121.5 234L121.8 238.2L122.2 234.2L122.5 230.9L122.8 233.1L123.2 239L123.5 235.8L123.8 236L124.2 239.8L124.5 239.8L124.8 240.2L125.2 233.2L125.5 240.1L125.8 236.7L126.2 237.5L126.5 235.8L126.8 237L127.2 234.7L127.5 231.9L127.8 227.7L128.2 232.1L128.5 226.9L128.8 229.4L129.2 228.8L129.5 228.9L129.8 232.9L130.2 232.7L130.5 231.8L130.8 228.5L131.2 228.6L131.5 222.4L131.8 223.1L132.2 225.6L132.5 222.8L132.8 223.7L133.2 226.1L133.5 221.2L133.8 225.9L134.2 224.5L134.5 218.7L134.8 220.4L135.2 222.3L135.5 212L135.8 200L136.2 204L136.5 212.2L136.8 207.5L137.2 206.1L137.5 206.7L137.8 212L138.2 213.1L138.5 206.3L138.8 209.5L139.2 210.4L139.5 205.4L139.8 211.4L140.2 209.9L140.5 208.9L140.8 206.9L141.2 208.9L141.5 208.8L141.8 188L142.2 192L142.5 211.9L142.8 209L143.2 205.5L143.5 214.8L143.8 214.2L144.2 215.3L144.5 216.5L144.8 217.5L145.2 217L145.5 220.3L145.8 219.4L146.2 220.4L146.5 221.1L146.8 215.6L147.2 224L147.5 221.7L147.8 215L148.2 218.8L148.5 217.3L148.8 209.6L149.2 211.4L149.5 211.9L149.8 207.4L150.2 207.7L150.5 190L150.8 194L151.2 206.3L151.5 209L151.8 209.2L152.2 209.5L152.5 206.7L152.8 203.6L153.2 201.7L153.5 207L153.8 206.5L154.2 199.8L154.5 201.1L154.8 209L155.2 205.9L155.5 206.8L155.8 199.5L156.2 199.9L156.5 201.3L156.8 195L157.2 199L157.5 199.9L157.8 202.3L158.2 198.6L158.5 205.6L158.8 205.5L159.2 193.3L159.5 197.7L159.8 199.6L160.2 196.5L160.5 203.7L160.8 194.1L161.2 202.2L161.5 194.7L161.8 202.6L162.2 191.4L162.5 202.4L162.8 202.4L163.2 198.2L163.5 194.3L163.8 195.3L164.2 190.9L164.5 193.1L164.8 196.6L165.2 196.6L165.5 195.7L165.8 202L166.2 184.1L166.5 200.4L166.8 201.5L167.2 193.3L167.5 188.4L167.8 200.5L168.2 199L168.5 185.4L168.8 201.9L169.2 191.1L169.5 198.5L169.8 197.1L170.2 192.8L170.5 199L170.8 188.1L171.2 186.1L171.5 194.1L171.8 201.5L172.2 198.2L172.5 186.7L172.8 195.8L173.2 187.9L173.5 191.9L173.8 201.1L174.2 189.9L174.5 187.1L174.8 200.3L175.2 188.7L175.5 194.7L175.8 189.3L176.2 200.3L176.5 197.1L176.8 197.8L177.2 186.5L177.5 190.6L177.8 198.5L178.2 189.3L178.5 186.3L178.8 202.5L179.2 188.7L179.5 193.9L179.8 187.3L180.2 186.1L180.5 192.1L180.8 194.4L181.2 196.4L181.5 199L181.8 192.2L182.2 194.9L182.5 188.7L182.8 198.1L183.2 189.1L183.5 184L183.8 186.8L184.2 185.6L184.5 193.6L184.8 185.7L185.2 190.5L185.5 188.3L185.8 195.8L186.2 187.5L186.5 186.6L186.8 187.4L187.2 185.7L187.5 193.2L187.8 191L188.2 193.7L188.5 184.2L188.8 195.3L189.2 191L189.5 198L189.8 198.2L190.2 182.2L190.5 191.7L190.8 185.9L191.2 193.1L191.5 183.9L191.8 190.9L192.2 194L192.5 190.7L192.8 186.3L193.2 193.5L193.5 196.5L193.8 185.6L194.2 182.8L194.5 187.4L194.8 187.6L195.2 187.3L195.5 196.3L195.8 184.6L196.2 181.5L196.5 180.8L196.8 188.4L197.2 184.8L197.5 188.3L197.8 191.6L198.2 185.5L198.5 182.2L198.8 195.1L199.2 183L199.5 178L199.8 180.1L200.2 189.8L200.5 183.5L200.8 191.8L201.2 186.5L201.5 193L201.8 184.7L202.2 192L202.5 180.2L202.8 184.7L203.2 184.1L203.5 185.4L203.8 182.2L204.2 183.3L204.5 194.5L204.8 179.6L205.2 186.4L205.5 193.1L205.8 185.6L206.2 185.2L206.5 197.2L206.8 179.9L207.2 180.9L207.5 189.1L207.8 187.3L208.2 181L208.5 185.1L208.8 193.4L209.2 180.3L209.5 193.5L209.8 192.3L210.2 185.6L210.5 179.2L210.8 184.3L211.2 189.4L211.5 187.2L211.8 190.2L212.2 184.4L212.5 176L212.8 176.3L213.2 189L213.5 184.6L213.8 190.7L214.2 189.5L214.5 186L214.8 185.1L215.2 188.1L215.5 177.8L215.8 181.1L216.2 185.5L216.5 183.4L216.8 177.4L217.2 179.9L217.5 176.6L217.8 188.3L218.2 177.2L218.5 184.9L218.8 176.8L219.2 176L219.5 174.4L219.8 179.7L220.2 187.6L220.5 188.8L220.8 182.5L221.2 187.9L221.5 184.3L221.8 189.4L222.2 176.7L222.5 177.4L222.8 177.6L223.2 186.8L223.5 188.7L223.8 185.9L224.2 189L224.5 172.8L224.8 175.4L225.2 175.2L225.5 178.1L225.8 178.7L226.2 179.2L226.5 175L226.8 181.1L227.2 183.3L227.5 185.9L227.8 174.6L228.2 191.5L228.5 176.3L228.8 178.9L229.2 187.1L229.5 174.3L229.8 178.8L230.2 177.6L230.5 173L230.8 172.2L231.2 174.9L231.5 190.1L231.8 172.1L232.2 174.6L232.5 187.2L232.8 179.3L233.2 175.7L233.5 187.6L233.8 183.1L234.2 176.7L234.5 185.2L234.8 171.3L235.2 176L235.5 186.8L235.8 179.5L236.2 172.1L236.5 171.9L236.8 186.4L237.2 176.7L237.5 185.3L237.8 174.5L238.2 180L238.5 174L238.8 184.4L239.2 183.4L239.5 186.4L239.8 178.1L240.2 182.7L240.5 171.2L240.8 180L241.2 182.2L241.5 182.2L241.8 174.1L242.2 169.6L242.5 179.8L242.8 182.2L243.2 178.3L243.5 172.1L243.8 175.9L244.2 172.8L244.5 183.9L244.8 180.4L245.2 179.2L245.5 181L245.8 185.5L246.2 185L246.5 168.7L246.8 169.2L247.2 185.4L247.5 174.6L247.8 180.8L248.2 174.6L248.5 181.8L248.8 180.9L249.2 173L249.5 188.7L249.8 168.2L250.2 168.5L250.5 176.5L250.8 183.4L251.2 184.7L251.5 168.3L251.8 173.1L252.2 169.6L252.5 182.6L252.8 174.1L253.2 172.7L253.5 174.7L253.8 165.7L254.2 176.1L254.5 168.4L254.8 168.6L255.2 171.5L255.5 168.9L255.8 183.6L256.2 169.4L256.5 182.1L256.8 171.9L257.2 183.8L257.5 169.1L257.8 176.5L258.2 178.7L258.5 166.8L258.8 175.9L259.2 174.9L259.5 180.2L259.8 172.6L260.2 174.7L260.5 166.5L260.8 178.1L261.2 182.8L261.5 179.5L261.8 179.8L262.2 179L262.5 162.6L262.8 182.1L263.2 167.1L263.5 173.9L263.8 179.9L264.2 178.3L264.5 169.7L264.8 170.6L265.2 174.8L265.5 172L265.8 167.8L266.2 170L266.5 178.2L266.8 173.1L267.2 174L267.5 167.1L267.8 165.4L268.2 180.9L268.5 179.7L268.8 173.5L269.2 176.2L269.5 176.5L269.8 172.5L270.2 162.3L270.5 165L270.8 177.6L271.2 178.9L271.5 165.6L271.8 178.7L272.2 164.7L272.5 179.8L272.8 173.1L273.2 172.9L273.5 181.7L273.8 177.1L274.2 182.6L274.5 178.9L274.8 171.8L275.2 168.9L275.5 178L275.8 178.2L276.2 174.6L276.5 168.5L276.8 181L277.2 177.9L277.5 166.5L277.8 175L278.2 173.7L278.5 164.2L278.8 175.3L279.2 164.8L279.5 175.2L279.8 182.8L280.2 178.8L280.5 168.2L280.8 173.2L281.2 175.9L281.5 163.7L281.8 166.3L282.2 173.4L282.5 178L282.8 170.2L283.2 179.6L283.5 180.2L283.8 169.5L284.2 168.9L284.5 174L284.8 173.9L285.2 178.5L285.5 165.8L285.8 178.5L286.2 170.5L286.5 167.3L286.8 168.9L287.2 165.7L287.5 167.1L287.8 175.4L288.2 168.1L288.5 177.5L288.8 173.5L289.2 168.7L289.5 168.6L289.8 171.8L290.2 172.2L290.5 166.8L290.8 161.7L291.2 171.3L291.5 166.9L291.8 175L292.2 176.9L292.5 167.1L292.8 167.3L293.2 178.5L293.5 174.9L293.8 174.8L294.2 165L294.5 177.2L294.8 171.2L295.2 168.9L295.5 164.7L295.8 172.7L296.2 174.3L296.5 167.3L296.8 173.5L297.2 172.1L297.5 164.5L297.8 171.6L298.2 161.3L298.5 168.1L298.8 168.1L299.2 172.2L299.5 172.3L299.8 168.9L300.2 158.7L300.5 160.6L300.8 169.2L301.2 173.6L301.5 153.7L301.8 172L302.2 166.6L302.5 169.6L302.8 157.7L303.2 164.4L303.5 173.7L303.8 159.4L304.2 160.5L304.5 163.7L304.8 165.1L305.2 157.1L305.5 153.8L305.8 166.8L306.2 156L306.5 160.1L306.8 160.4L307.2 159.9L307.5 172L307.8 159L308.2 176.2L308.5 152.9L308.8 171.4L309.2 168L309.5 158.3L309.8 164.7L310.2 176.2L310.5 154.2L310.8 169.6L311.2 158.4L311.5 166.3L311.8 155.2L312.2 161.8L312.5 160L312.8 166L313.2 158L313.5 154.8L313.8 149.3L314.2 153.6L314.5 170.3L314.8 158.5L315.2 168.2L315.5 161.1L315.8 168.7L316.2 160.5L316.5 154.9L316.8 155.8L317.2 158.8L317.5 153.3L317.8 162.8L318.2 152.1L318.5 159.5L318.8 169.8L319.2 168.1L319.5 158.4L319.8 166.7L320.2 159.7L320.5 172.4L320.8 165.8L321.2 160.3L321.5 167.9L321.8 166.5L322.2 157.5L322.5 163.7L322.8 147.5L323.2 154.6L323.5 166.1L323.8 155.5L324.2 167L324.5 153.2L324.8 158.8L325.2 146.1L325.5 163.2L325.8 162.1L326.2 155.5L326.5 152.9L326.8 166.9L327.2 161.9L327.5 160.7L327.8 162.5L328.2 148.2L328.5 151.5L328.8 165L329.2 155.8L329.5 163L329.8 165.6L330.2 166.5L330.5 167.2L330.8 165.3L331.2 154.6L331.5 163.4L331.8 162.3L332.2 156.6L332.5 164.1L332.8 156.9L333.2 152.1L333.5 159.6L333.8 151.3L334.2 166L334.5 150.7L334.8 154.3L335.2 155.7L335.5 150.9L335.8 156.1L336.2 156.9L336.5 149.1L336.8 150.1L337.2 157.6L337.5 154L337.8 163.7L338.2 149.2L338.5 165.1L338.8 150.5L339.2 149.2L339.5 157.5L339.8 164.8L340.2 159.2L340.5 151.6L340.8 158.7L341.2 157.3L341.5 149L341.8 157.9L342.2 162.4L342.5 161.9L342.8 153.8L343.2 153.1L343.5 155.3L343.8 157.7L344.2 149.1L344.5 150.6L344.8 149.9L345.2 159.2L345.5 158.5L345.8 163.6L346.2 152.2L346.5 154L346.8 165.3L347.2 153.1L347.5 158.7L347.8 143.3L348.2 165.3L348.5 149.4L348.8 162L349.2 153.2L349.5 159.2L349.8 160.2L350.2 151.1L350.5 151.9L350.8 147.5L351.2 154.5L351.5 154.3L351.8 157.1L352.2 149.1L352.5 151.4L352.8 152.7L353.2 158.4L353.5 152L353.8 159.9L354.2 155.9L354.5 160.1L354.8 160.1L355.2 150.9L355.5 160.6L355.8 153.7L356.2 161.2L356.5 156L356.8 160.9L357.2 156L357.5 148.1L357.8 155L358.2 147.5L358.5 160.3L358.8 161.4L359.2 147.7L359.5 160L359.8 154.4L360.2 158L360.5 157.9L360.8 151.2L361.2 161L361.5 146.4L361.8 163.9L362.2 153.8L362.5 162.9L362.8 149.6L363.2 161.6L363.5 150.5L363.8 161.5L364.2 159.3L364.5 162.1L364.8 158.1L365.2 147.8L365.5 147.3L365.8 158L366.2 159.7L366.5 161.2L366.8 158.1L367.2 163.2L367.5 151L367.8 151.8L368.2 146.7L368.5 160.9L368.8 149.9L369.2 158.5L369.5 157.4L369.8 158.9L370.2 166.6L370.5 147.1L370.8 161.1L371.2 162.8L371.5 147.3L371.8 163.1L372.2 156.7L372.5 160.1L372.8 161.4L373.2 167.3L373.5 153.4L373.8 157.6L374.2 146.2L374.5 152.1L374.8 153.2L375.2 145.3L375.5 159.8L375.8 159.3L376.2 153.2L376.5 150.1L376.8 146.6L377.2 162.6L377.5 147L377.8 145.9L378.2 151.2L378.5 162.1L378.8 145.7L379.2 146.1L379.5 140.7L379.8 152.8L380.2 158.4L380.5 149.4L380.8 152L381.2 159.5L381.5 140.8L381.8 148.9L382.2 159.7L382.5 157.8L382.8 161.9L383.2 159.6L383.5 156.8L383.8 145.9L384.2 146.4L384.5 142.2L384.8 158.6L385.2 150.6L385.5 145.5L385.8 162.2L386.2 151.3L386.5 145.3L386.8 158.3L387.2 166.3L387.5 149.7L387.8 146.1L388.2 157.4L388.5 140.5L388.8 156.9L389.2 152.8L389.5 159.9L389.8 149.5L390.2 158.9L390.5 153.9L390.8 148.6L391.2 154.8L391.5 149.5L391.8 149.2L392.2 146.3L392.5 152.3L392.8 149.6L393.2 148.6L393.5 142.3L393.8 157.9L394.2 146.3L394.5 158.9L394.8 144.9L395.2 141.1L395.5 158.4L395.8 152.8L396.2 154.6L396.5 147.8L396.8 140.3L397.2 154.3L397.5 156.7L397.8 147.8L398.2 141.3L398.5 145.4L398.8 156.5L399.2 139.5L399.5 146L399.8 142L400.2 152.5L400.5 153L400.8 147.2L401.2 151L401.5 155.2L401.8 142.4L402.2 146.5L402.5 152L402.8 137.6L403.2 154.2L403.5 140.7L403.8 139.3L404.2 137.3L404.5 143L404.8 145.3L405.2 139L405.5 143L405.8 135.2L406.2 144.1L406.5 140.8L406.8 133.2L407.2 141.5L407.5 142.7L407.8 137.6L408.2 140.1L408.5 140.5L408.8 138.6L409.2 131.2L409.5 129.6L409.8 135.6L410.2 141L410.5 143.3L410.8 136.9L411.2 136L411.5 139.1L411.8 131.3L412.2 142.4L412.5 133.4L412.8 129.8L413.2 140.6L413.5 127.6L413.8 145.4L414.2 127.6L414.5 138.8L414.8 132.8L415.2 120L415.5 132.9L415.8 121.9L416.2 128.4L416.5 129.8L416.8 130L417.2 135.8L417.5 125.8L417.8 128.4L418.2 114.7L418.5 126.4L418.8 138.6L419.2 134.1L419.5 124.8L419.8 119L420.2 129.1L420.5 126.7L420.8 142.5L421.2 120.8L421.5 121.9L421.8 132.2L422.2 136L422.5 134.1L422.8 128.8L423.2 135.6L423.5 144.8L423.8 140.9L424.2 141.5L424.5 135.3L424.8 144.7L425.2 133.7L425.5 146.6L425.8 130.6L426.2 129.6L426.5 132.3L426.8 140.9L427.2 146.4L427.5 132.9L427.8 140.6L428.2 131.2L428.5 138.5L428.8 145.8L429.2 146.6L429.5 146.7L429.8 142.7L430.2 133.4L430.5 146L430.8 147.7L431.2 140.9L431.5 152.5L431.8 148.3L432.2 145.2L432.5 136.1L432.8 132.8L433.2 145.4L433.5 146L433.8 148.1L434.2 148.9L434.5 152.5L434.8 150L435.2 142.2L435.5 144.6L435.8 146L436.2 144.7L436.5 157.5L436.8 142.1L437.2 142.8L437.5 150L437.8 144.1L438.2 145.3L438.5 149.1L438.8 154.2L439.2 154.9L439.5 149.1L439.8 155.7L440.2 146.6L440.5 142.9L440.8 149.9L441.2 154.3L441.5 138.9L441.8 150.2L442.2 142.7L442.5 152.7L442.8 158.1L443.2 155L443.5 153.8L443.8 151.9L444.2 162.3L444.5 153.7L444.8 149.8L445.2 147.3L445.5 146.1L445.8 155.1L446.2 142.6L446.5 149.6L446.8 147.3L447.2 150.1L447.5 149.3L447.8 146.5L448.2 144.7L448.5 158.3L448.8 144.3L449.2 147.7L449.5 144.1L449.8 145.6L450.2 151.8L450.5 146.9L450.8 144.9L451.2 156.7L451.5 150.2L451.8 154.1L452.2 152.4L452.5 148.8L452.8 158L453.2 143.3L453.5 150.7L453.8 143.5L454.2 156.7L454.5 153.4L454.8 155.9L455.2 159.7L455.5 160.4L455.8 159.3L456.2 156.6L456.5 159.3L456.8 158.2L457.2 156.6L457.5 149.7L457.8 153.7L458.2 151.4L458.5 156.8L458.8 158.1L459.2 148.9L459.5 150.9L459.8 153.8L460.2 144.7L460.5 156.8L460.8 147.5L461.2 148.6L461.5 153.7L461.8 156.9L462.2 150.1L462.5 154.4L462.8 148.7L463.2 146.5L463.5 152.7L463.8 151.4L464.2 157.5L464.5 145.8L464.8 147.2L465.2 147.3L465.5 154.9L465.8 155.1L466.2 162.7L466.5 150.3L466.8 158.8L467.2 163.5L467.5 158.5L467.8 150.2L468.2 159.8L468.5 159.2L468.8 158.3L469.2 153.9L469.5 157.1L469.8 155L470.2 161.1L470.5 163.5L470.8 151.1L471.2 161.5L471.5 148.7L471.8 147.2L472.2 159.1L472.5 149.8L472.8 147.1L473.2 150.1L473.5 163.9L473.8 148.6L474.2 153.4L474.5 163.9L474.8 146.9L475.2 162.4L475.5 149.6L475.8 158.6L476.2 146.7L476.5 146.5L476.8 152L477.2 150.2L477.5 153.6L477.8 155.5L478.2 147.6L478.5 157.8L478.8 164L479.2 160.2L479.5 158.7L479.8 157.3L480.2 149.7L480.5 153.2L480.8 158.2L481.2 152.9L481.5 153.9L481.8 153.4L482.2 160.7L482.5 158L482.8 150L483.2 161.2L483.5 155.8L483.8 150.9L484.2 157L484.5 162.4L484.8 168L485.2 154.8L485.5 148.5L485.8 155.8L486.2 164.3L486.5 149.5L486.8 163.6L487.2 153L487.5 161.1L487.8 163.2L488.2 163.2L488.5 160L488.8 158.6L489.2 155.6L489.5 160.6L489.8 159.3L490.2 159.9L490.5 153L490.8 149L491.2 149.2L491.5 149.4L491.8 154.6L492.2 158.3L492.5 162L492.8 154.3L493.2 164.7L493.5 152.7L493.8 164.4L494.2 161.4L494.5 152.5L494.8 153.4L495.2 154.4L495.5 153.4L495.8 165.8L496.2 152.2L496.5 147.2L496.8 153.5L497.2 161.1L497.5 163.5L497.8 161L498.2 158.5L498.5 152L498.8 157.5L499.2 146.7L499.5 159.6L499.8 170.3L500.2 160.1L500.5 157.3L500.8 160.7L501.2 152L501.5 154.7L501.8 167.7L502.2 153.2L502.5 150.6L502.8 161.6L503.2 161.8L503.5 148.4L503.8 160.7L504.2 168.2L504.5 166L504.8 155.6L505.2 163.5L505.5 161.3L505.8 157.4L506.2 163.8L506.5 154.1L506.8 155.3L507.2 157.2L507.5 165.7L507.8 156.8L508.2 154.1L508.5 165.3L508.8 154.2L509.2 155.8L509.5 167.9L509.8 161.9L510.2 152.7L510.5 163.3L510.8 160L511.2 158.9L511.5 158.3L511.8 166.3L512.2 156.2L512.5 170L512.8 165.4L513.2 148.4L513.5 167.3L513.8 165.8L514.2 148.4L514.5 159.8L514.8 170.6L515.2 163L515.5 159.4L515.8 169L516.2 164.6L516.5 162.4L516.8 167L517.2 155.9L517.5 154.4L517.8 162.8L518.2 168.7L518.5 158.5L518.8 156.9L519.2 151.1L519.5 155.4L519.8 159L520.2 169.8L520.5 170.6L520.8 163.5L521.2 158.1L521.5 162.2L521.8 171.1L522.2 170.2L522.5 167.9L522.8 153.5L523.2 166.8L523.5 161.4L523.8 162.9L524.2 164.4L524.5 171.3L524.8 162.1L525.2 166.1L525.5 169.4L525.8 159.1L526.2 164L526.5 158.4L526.8 168.3L527.2 156.1L527.5 167L527.8 173.2L528.2 158.4L528.5 157.4L528.8 167.3L529.2 162.7L529.5 160.4L529.8 162.9L530.2 170.6L530.5 166.9L530.8 174.7L531.2 167.9L531.5 176.8L531.8 161.6L532.2 165.8L532.5 160.6L532.8 167.9L533.2 155L533.5 172.6L533.8 162L534.2 159.2L534.5 175.4L534.8 165.1L535.2 167.8L535.5 163.5L535.8 175.5L536.2 171.5L536.5 159.1L536.8 159.9L537.2 168L537.5 181.3L537.8 168.8L538.2 171.4L538.5 166.2L538.8 155.8L539.2 164L539.5 169.3L539.8 167.4L540.2 162.2L540.5 170.3L540.8 172.7L541.2 157.2L541.5 161.7L541.8 160.7L542.2 172.8L542.5 174.7L542.8 162.3L543.2 177.5L543.5 175.8L543.8 166.4L544.2 173.3L544.5 167.9L544.8 160.9L545.2 166.9L545.5 158.2L545.8 165.8L546.2 170L546.5 169.1L546.8 168.9L547.2 171.1L547.5 181.7L547.8 162.3L548.2 176.5L548.5 171.2L548.8 163L549.2 163.2L549.5 176.3L549.8 175.1L550.2 169.6L550.5 176.3L550.8 164.5L551.2 179.6L551.5 168.6L551.8 174.3L552.2 171.8L552.5 175.9L552.8 168.8L553.2 166.7L553.5 165L553.8 170.7L554.2 158.8L554.5 168.8L554.8 175.2L555.2 179.4L555.5 165.9L555.8 164.6L556.2 174.8L556.5 179.8L556.8 176.5L557.2 165.4L557.5 162.3L557.8 171.9L558.2 163.2L558.5 168.7L558.8 169.4L559.2 184.9L559.5 172.3L559.8 174.8L560.2 169.5L560.5 170.6L560.8 165.2L561.2 178.3L561.5 161.1L561.8 163L562.2 180L562.5 173.8L562.8 179.8L563.2 166.9L563.5 178L563.8 164.8L564.2 178.8L564.5 167L564.8 173.8L565.2 176.9L565.5 172.8L565.8 178.8L566.2 175.8L566.5 175L566.8 181.3L567.2 174.1L567.5 182L567.8 182.1L568.2 176.1L568.5 163.9L568.8 179.2L569.2 177.8L569.5 180.6L569.8 176.2L570.2 181.5L570.5 175L570.8 181.4L571.2 173.5L571.5 170.4L571.8 179.6L572.2 166L572.5 169.7L572.8 179.8L573.2 182.1L573.5 173.6L573.8 178.2L574.2 173.8L574.5 172.3L574.8 180.1L575.2 168.6L575.5 176.2L575.8 186.4L576.2 172.1L576.5 182L576.8 171.4L577.2 173.1L577.5 168.8L577.8 172L578.2 181.8L578.5 175.1L578.8 174.9L579.2 177L579.5 173.7L579.8 177.4L580.2 179L580.5 170.2L580.8 175.2L581.2 170.9L581.5 167.1L581.8 179.2L582.2 184.2L582.5 182L582.8 175.5L583.2 170.9L583.5 184.1L583.8 177.2L584.2 183L584.5 173.2L584.8 179.2L585.2 181.4L585.5 180.5L585.8 173.5L586.2 184.7L586.5 180.5L586.8 171.6L587.2 171.1L587.5 181.2L587.8 171.5L588.2 163.7L588.5 177.1L588.8 172L589.2 171.1L589.5 174.4L589.8 173.6L590.2 173.8L590.5 182L590.8 169.5L591.2 176.2L591.5 181.7L591.8 178.1L592.2 166.6L592.5 168.9L592.8 182.7L593.2 180.6L593.5 179.5L593.8 174.6L594.2 174.8L594.5 167.4L594.8 175.1L595.2 182.1L595.5 168.5L595.8 176.5L596.2 188.1L596.5 178.8L596.8 174L597.2 171.1L597.5 180.6L597.8 186.8L598.2 181.9L598.5 186.9L598.8 181.9L599.2 183.1L599.5 185.6L599.8 185.9L600.2 182.6L600.5 187.7L600.8 179.5L601.2 170.8L601.5 171.5L601.8 178.5L602.2 170.8L602.5 170L602.8 177.4L603.2 174.2L603.5 170.7L603.8 185.3L604.2 179L604.5 187.4L604.8 186.6L605.2 178.5L605.5 174.8L605.8 176.5L606.2 187.5L606.5 184.1L606.8 169.8L607.2 184.2L607.5 184.4L607.8 179.4L608.2 173.2L608.5 187.2L608.8 180L609.2 183.7L609.5 173.9L609.8 179.8L610.2 176.5L610.5 174L610.8 188.8L611.2 173.5L611.5 185.5L611.8 177.9L612.2 188.5L612.5 183.6L612.8 174.3L613.2 176.2L613.5 177.9L613.8 186.3L614.2 178L614.5 187.7L614.8 175.4L615.2 185.1L615.5 172.5L615.8 183.7L616.2 181.1L616.5 189.3L616.8 175.3L617.2 171.4L617.5 185.7L617.8 172.6L618.2 175.2L618.5 187.8L618.8 185.6L619.2 181.5L619.5 184L619.8 178.1L620.2 176.7L620.5 173.4L620.8 190.4L621.2 179.7L621.5 185L621.8 185.7L622.2 186.8L622.5 178L622.8 187.1L623.2 179.5L623.5 181.7L623.8 185.2L624.2 190.6L624.5 179.8L624.8 178.5L625.2 186.1L625.5 173.6L625.8 181.3L626.2 191L626.5 183.4L626.8 170.2L627.2 179.7L627.5 173L627.8 186.4L628.2 189.4L628.5 179.4L628.8 191.1L629.2 181.6L629.5 177L629.8 187.2L630.2 177.8L630.5 190L630.8 188.4L631.2 186.6L631.5 187.9L631.8 182.7L632.2 190.7L632.5 188.6L632.8 183.6L633.2 180.3L633.5 178.8L633.8 186.9L634.2 190.5L634.5 181.5L634.8 182.3L635.2 179.1L635.5 177.8L635.8 180.8L636.2 188.5L636.5 183.4L636.8 183.2L637.2 190.1L637.5 186.2L637.8 190L638.2 193L638.5 188.8L638.8 185.3L639.2 175.4L639.5 173.3L639.8 190.5L640.2 177.9L640.5 186.8L640.8 173.6L641.2 196.9L641.5 189.6L641.8 181.8L642.2 190.9L642.5 186.9L642.8 183.1L643.2 186.9L643.5 194.7L643.8 180.7L644.2 192.8L644.5 178.1L644.8 179.9L645.2 177.3L645.5 186.6L645.8 195.1L646.2 180.4L646.5 182.2L646.8 187.8L647.2 182.1L647.5 188.1L647.8 176.2L648.2 178.4L648.5 183.6L648.8 180L649.2 193.3L649.5 183.3L649.8 183.6L650.2 179.1L650.5 188.1L650.8 179.5L651.2 189.5L651.5 193.3L651.8 191.7L652.2 194.2L652.5 189.2L652.8 183.4L653.2 194.8L653.5 189.3L653.8 197.6L654.2 195.2L654.5 185.7L654.8 196.5L655.2 195L655.5 194L655.8 199.9L656.2 196.1L656.5 201.5L656.8 193.4L657.2 187.4L657.5 195.5L657.8 193.3L658.2 187.7L658.5 188.2L658.8 192.5L659.2 187.7L659.5 194.3L659.8 185.2L660.2 183.4L660.5 182.6L660.8 190.8L661.2 188.1L661.5 194.4L661.8 184.3L662.2 196.8L662.5 188.3L662.8 197.1L663.2 198.5L663.5 193.4L663.8 197.6L664.2 193L664.5 196L664.8 199.6L665.2 183.5L665.5 196.1L665.8 194.9L666.2 196.3L666.5 186.9L666.8 185.3L667.2 190L667.5 193.1L667.8 191.8L668.2 191.5L668.5 190.5L668.8 195.8L669.2 190.3L669.5 201.9L669.8 201.6L670.2 202.2L670.5 195.4L670.8 192.5L671.2 199L671.5 204.6L671.8 196.5L672.2 202L672.5 192.7L672.8 191.5L673.2 188.4L673.5 200.1L673.8 201.8L674.2 195.6L674.5 188.7L674.8 203.6L675.2 202L675.5 198L675.8 202.8L676.2 199.7L676.5 208.9L676.8 204.3L677.2 207.5L677.5 211.1L677.8 208.8L678.2 205.3L678.5 203.1L678.8 204.6L679.2 197.3L679.5 199L679.8 203.7L680.2 199.7L680.5 201.9L680.8 206.8L681.2 206.4L681.5 207.5L681.8 202.2L682.2 206.5L682.5 201.2L682.8 191L683.2 195L683.5 204.6L683.8 202L684.2 202.1L684.5 207.9L684.8 199.3L685.2 203.3L685.5 203.2L685.8 194L686.2 198L686.5 210.7L686.8 210.4L687.2 214.8L687.5 217.7L687.8 220.2L688.2 222.8L688.5 222.5L688.8 225.2L689.2 224.2L689.5 219.6L689.8 224.5L690.2 224.7L690.5 223.7L690.8 222.8L691.2 221.7L691.5 215.9L691.8 211.1L692.2 209.9L692.5 207L692.8 190L693.2 194L693.5 204.2L693.8 207.2L694.2 207.6L694.5 207.9L694.8 209.8L695.2 208.4L695.5 202.6L695.8 205.7L696.2 206.4L696.5 207.7L696.8 203.3L697.2 207.4L697.5 200.6L697.8 203.1L698.2 201.8L698.5 199.8L698.8 196L699.2 200L699.5 205L699.8 208.4L700.2 205.8L700.5 209.9L700.8 210.2L701.2 210.2L701.5 214L701.8 217.7L702.2 216.3L702.5 217.1L702.8 219.7L703.2 216.9L703.5 219.9L703.8 220L704.2 221L704.5 227.4L704.8 226.7L705.2 224.1L705.5 225.2L705.8 222.8L706.2 229.1L706.5 226.6L706.8 221.2L707.2 228.6L707.5 226.9L707.8 222.2L708.2 227.4L708.5 224.1L708.8 220.9L709.2 224.8L709.5 223.4L709.8 228.9L710.2 229.5L710.5 228.7L710.8 228L711.2 234.6L711.5 231.1L711.8 230.1L712.2 236.1L712.5 236.8L712.8 232.1L713.2 234.4L713.5 234.1L713.8 235.9L714.2 243.7L714.5 245.3L714.8 247.3L715.2 244.4L715.5 242.3L715.8 248.7L716.2 243.6L716.5 248.7L716.8 246L717.2 244.5L717.5 240.6L717.8 243.3L718.2 243L718.5 248L718.8 249L719.2 249.7L719.5 251.2L719.8 253.5L720.2 255.3L720.5 254.5L720.8 250L721.2 250.1L721.5 255.3L721.8 252.9L722.2 253.8L722.5 254.3L722.8 256.8L723.2 258.8L723.5 256.2L723.8 265.9L724.2 264.4L724.5 266.3L724.8 271.4L725.2 267.6L725.5 268.5L725.8 274.5L726.2 273.2L726.5 271.5L726.8 279.1L727.2 271.9L727.5 276.7L727.8 280.1L728.2 274.9L728.5 278L728.8 268L729.2 272L729.5 280.4L729.8 277.8L730.2 281.1L730.5 283.3L730.8 277.1L731.2 275.2L731.5 273.3L731.8 275.1L732.2 272.1L732.5 274.5L732.8 279.7L733.2 277.4L733.5 274L733.8 276L734.2 273.1L734.5 281.4L734.8 283.1L735.2 278.2L735.5 282L735.8 284.6L736.2 270.4L736.5 275.2L736.8 275.7L737.2 277.3L737.5 274.2L737.8 273.6L738.2 284.4L738.5 280L738.8 274.4L739.2 282.6L739.5 274.4L739.8 280.4L740.2 284L740.5 273.6L740.8 273.5L741.2 274.8L741.5 279.2L741.8 283L742.2 278.1L742.5 276.9L742.8 276.8L743.2 273.5L743.5 270.4L743.8 279.8L744.2 279L744.5 275.6L744.8 275.3L745.2 277.1L745.5 283L745.8 275.3L746.2 279.7L746.5 277.5L746.8 280.9L747.2 275.2L747.5 277.4L747.8 273.8L748.2 282L748.5 276.6L748.8 276.1L749.2 282.1L749.5 282.8L749.8 282.5L750.2 279.3L750.5 283.4L750.8 274.9L751.2 275.9L751.5 275.1L751.8 278.3L752.2 278.5L752.5 276.3L752.8 278.4L753.2 274.7L753.5 276.2L753.8 277.8L754.2 275.8L754.5 277.7L754.8 273.1L755.2 278.2L755.5 282.2L755.8 273.9L756.2 283.4L756.5 273.7L756.8 278.2L757.2 277.3L757.5 273.9L757.8 277.3L758.2 274.2L758.5 279.4L758.8 281.8L759.2 276.7L759.5 273.4L759.8 278.9L760.2 277.9L760.5 277.7L760.8 277.7L761.2 287.5L761.5 281.2L761.8 273.2L762.2 275.4L762.5 282L762.8 274.3L763.2 279.9L763.5 273.3L763.8 283.7L764.2 282.6L764.5 282.5L764.8 278L765.2 284.1L765.5 279.9L765.8 277.9L766.2 284.7L766.5 273.3L766.8 283.7L767.2 278.4L767.5 281.4L767.8 280.4L768.2 273.6L768.5 279.6L768.8 275.5L769.2 275L769.5 279.7L769.8 281.6L770.2 272.5L770.5 286.9L770.8 279.6L771.2 283.6L771.5 286.7L771.8 286.9L772.2 284.6L772.5 280.1L772.8 274.6L773.2 281.3L773.5 284.4L773.8 279.6L774.2 273.7L774.5 282L774.8 279.4L775.2 281.1L775.5 279.6L775.8 283L776.2 277.8L776.5 278.5L776.8 274.8L777.2 282.9L777.5 284.9L777.8 284.4L778.2 283.7L778.5 273L778.8 283.8L779.2 275.8L779.5 281.4L779.8 277.1L780.2 283.9L780.5 284.6" stroke="#f26d22" stroke-width="0.8"/>
<path d="M55.5 273.3L55.8 278L56.2 279.4L56.5 272.8L56.8 274.4L57.2 283.9L57.5 273.9L57.8 274.8L58.2 288.3L58.5 281.1L58.8 277.9L59.2 279.5L59.5 281.3L59.8 276.5L60.2 274.8L60.5 282.4L60.8 280.9L61.2 278.9L61.5 282.5L61.8 279.4L62.2 287.2L62.5 275.6L62.8 280L63.2 279.3L63.5 277.9L63.8 280.9L64.2 276.8L64.5 283.7L64.8 284.2L65.2 275.1L65.5 278.9L65.8 276.3L66.2 273.8L66.5 283.2L66.8 277.4L67.2 273.7L67.5 279.8L67.8 274.4L68.2 283.1L68.5 275.1L68.8 273.2L69.2 275.5L69.5 277.5L69.8 279.2L70.2 284.7L70.5 282.5L70.8 278.1L71.2 274.1L71.5 275.8L71.8 285.7L72.2 279.2L72.5 281.8L72.8 274.1L73.2 273.8L73.5 283.4L73.8 280.3L74.2 276.9L74.5 277L74.8 274.3L75.2 275.3L75.5 273.5L75.8 283.2L76.2 278.8L76.5 274.7L76.8 281.9L77.2 275.2L77.5 273.5L77.8 279.8L78.2 283.2L78.5 272.6L78.8 281.8L79.2 274.3L79.5 273L79.8 272.2L80.2 275.7L80.5 281.1L80.8 278.4L81.2 282.9L81.5 275.4L81.8 276.8L82.2 276.2L82.5 285L82.8 284.5L83.2 277.3L83.5 278.4L83.8 276.8L84.2 282L84.5 273.4L84.8 273.7L85.2 277.7L85.5 275.7L85.8 282.9L86.2 281.7L86.5 284.8L86.8 280.7L87.2 281.1L87.5 282.2L87.8 284L88.2 274.6L88.5 280.4L88.8 274.5L89.2 278L89.5 282.1L89.8 283.3L90.2 281.6L90.5 272.9L90.8 276.7L91.2 274.3L91.5 284.2L91.8 274.1L92.2 275.4L92.5 276.9L92.8 273.5L93.2 283.3L93.5 280.7L93.8 272.9L94.2 279.3L94.5 274.4L94.8 280.7L95.2 272.7L95.5 273.8L95.8 274.7L96.2 280L96.5 280.9L96.8 277.1L97.2 280.9L97.5 277.4L97.8 274.8L98.2 277L98.5 278L98.8 284.2L99.2 274.6L99.5 274.3L99.8 280L100.2 284.8L100.5 284.1L100.8 281.6L101.2 273.9L101.5 282.7L101.8 281.2L102.2 274.6L102.5 278.4L102.8 273.3L103.2 282.3L103.5 281.2L103.8 282.4L104.2 282L104.5 276.3L104.8 282.7L105.2 271.5L105.5 275.2L105.8 278.4L106.2 279.8L106.5 277.5L106.8 281L107.2 280.7L107.5 276.1L107.8 280.4L108.2 277L108.5 281.3L108.8 275.7L109.2 281.5L109.5 276.6L109.8 278.6L110.2 280.1L110.5 278.1L110.8 274.8L111.2 283.4L111.5 272.7L111.8 275.3L112.2 277.9L112.5 271.6L112.8 272.5L113.2 279.6L113.5 278.8L113.8 276.4L114.2 278.9L114.5 276.6L114.8 270.5L115.2 274.1L115.5 269.9L115.8 274.7L116.2 270.2L116.5 267.4L116.8 276L117.2 273.7L117.5 274.3L117.8 272.1L118.2 274.7L118.5 270.7L118.8 271.5L119.2 264.8L119.5 270.1L119.8 272.5L120.2 271L120.5 272.3L120.8 268.7L121.2 273.4L121.5 264.2L121.8 274.2L122.2 269L122.5 266.4L122.8 273.6L123.2 272.1L123.5 272.1L123.8 277.4L124.2 269.1L124.5 275.1L124.8 272.4L125.2 273.4L125.5 272.7L125.8 267.9L126.2 272.1L126.5 276L126.8 267.3L127.2 265L127.5 265.3L127.8 269.9L128.2 275.5L128.5 263.4L128.8 273.6L129.2 267.2L129.5 261.3L129.8 263.9L130.2 260.4L130.5 265.3L130.8 262L131.2 258L131.5 251.1L131.8 262.9L132.2 261L132.5 256.4L132.8 255.2L133.2 258.1L133.5 259.9L133.8 249.8L134.2 250.5L134.5 252.6L134.8 254L135.2 249L135.5 246.2L135.8 250.1L136.2 251.6L136.5 255.1L136.8 253L137.2 246.2L137.5 243.1L137.8 249.1L138.2 252.7L138.5 252.3L138.8 241.8L139.2 250.5L139.5 250.1L139.8 245L140.2 248.6L140.5 245L140.8 243.1L141.2 247.5L141.5 242.8L141.8 248.8L142.2 250.5L142.5 251.8L142.8 246.3L143.2 242.2L143.5 249.3L143.8 248.2L144.2 248.4L144.5 244L144.8 244L145.2 240.3L145.5 237.7L145.8 239.1L146.2 243.7L146.5 240.1L146.8 244.1L147.2 242.5L147.5 242.3L147.8 247.8L148.2 240.1L148.5 243.7L148.8 239.7L149.2 246.8L149.5 241.7L149.8 235.1L150.2 237.2L150.5 240.8L150.8 238.1L151.2 234.8L151.5 233.1L151.8 236.8L152.2 238.7L152.5 238.1L152.8 245.1L153.2 241.9L153.5 242L153.8 240.4L154.2 237L154.5 237.3L154.8 235.4L155.2 234.8L155.5 230.6L155.8 237.6L156.2 231.4L156.5 228.6L156.8 232.4L157.2 234.3L157.5 230.8L157.8 230L158.2 232.8L158.5 227.7L158.8 226L159.2 231.7L159.5 237.4L159.8 234.1L160.2 223.6L160.5 233L160.8 223.9L161.2 224.3L161.5 229.4L161.8 225.5L162.2 223.9L162.5 224.5L162.8 226.9L163.2 226.5L163.5 228.7L163.8 232.4L164.2 227.6L164.5 226.2L164.8 230.6L165.2 225.2L165.5 223.3L165.8 229.3L166.2 230.4L166.5 227.5L166.8 239.2L167.2 233.2L167.5 234.5L167.8 236.6L168.2 230.7L168.5 233.8L168.8 225.1L169.2 229.5L169.5 236.3L169.8 235.1L170.2 237.3L170.5 240.5L170.8 237.5L171.2 229.9L171.5 229L171.8 231L172.2 233.4L172.5 236.4L172.8 234.1L173.2 235L173.5 237.7L173.8 231L174.2 237.2L174.5 231.1L174.8 233.3L175.2 238.3L175.5 238.1L175.8 235.8L176.2 235.1L176.5 240.8L176.8 235.7L177.2 233.6L177.5 236.2L177.8 234.3L178.2 242.6L178.5 236.1L178.8 244.9L179.2 237.5L179.5 238.6L179.8 241.7L180.2 234.3L180.5 240.1L180.8 237.5L181.2 240.6L181.5 237.2L181.8 239.8L182.2 247.5L182.5 242L182.8 242.7L183.2 247.6L183.5 250.4L183.8 245.3L184.2 246.9L184.5 251.1L184.8 252.7L185.2 251.6L185.5 248L185.8 248.8L186.2 255.3L186.5 255.6L186.8 258.2L187.2 257.6L187.5 254.2L187.8 251.9L188.2 260.1L188.5 258.8L188.8 258.2L189.2 259.8L189.5 257.4L189.8 257.6L190.2 260.5L190.5 260.2L190.8 262.4L191.2 264.6L191.5 263.7L191.8 259.3L192.2 259.4L192.5 265.2L192.8 260.1L193.2 264.5L193.5 257.6L193.8 262.1L194.2 263.7L194.5 267.5L194.8 269.1L195.2 262.8L195.5 268.3L195.8 269.3L196.2 263.8L196.5 268.2L196.8 262.7L197.2 264.9L197.5 253.5L197.8 254.2L198.2 249.4L198.5 249.9L198.8 246.8L199.2 244.3L199.5 242L199.8 243.8L200.2 242.5L200.5 247.6L200.8 243.3L201.2 237L201.5 241.3L201.8 241.2L202.2 248.2L202.5 241.8L202.8 249.7L203.2 243.1L203.5 246.2L203.8 237.3L204.2 244.3L204.5 241.8L204.8 239L205.2 239.7L205.5 239.1L205.8 236.5L206.2 238.5L206.5 234.7L206.8 232.9L207.2 239.7L207.5 238L207.8 245.2L208.2 236.4L208.5 242.2L208.8 243.3L209.2 241.8L209.5 242.7L209.8 233.2L210.2 232.7L210.5 228.4L210.8 233.4L211.2 230.4L211.5 230.1L211.8 228.7L212.2 237.8L212.5 232L212.8 235.3L213.2 234.3L213.5 237.8L213.8 239.1L214.2 235.6L214.5 237.8L214.8 233.8L215.2 236L215.5 235.7L215.8 237L216.2 237.5L216.5 240.4L216.8 238.3L217.2 238.6L217.5 244.1L217.8 237L218.2 237.9L218.5 239.5L218.8 248.6L219.2 247.3L219.5 249.3L219.8 252.7L220.2 246.3L220.5 256.2L220.8 248L221.2 251.1L221.5 253.1L221.8 254.6L222.2 248.4L222.5 248.7L222.8 242.5L223.2 242.9L223.5 247.9L223.8 245.7L224.2 241.1L224.5 241.7L224.8 241.4L225.2 234.2L225.5 239.3L225.8 233.1L226.2 230.1L226.5 233.8L226.8 233.6L227.2 233.8L227.5 237.9L227.8 225.7L228.2 230.8L228.5 232.9L228.8 229.5L229.2 234.3L229.5 226.3L229.8 229.4L230.2 222.8L230.5 230.4L230.8 225.9L231.2 230.4L231.5 224.9L231.8 228L232.2 230.3L232.5 233.1L232.8 227.1L233.2 229.7L233.5 220L233.8 216.5L234.2 222.9L234.5 226.1L234.8 222.6L235.2 217.9L235.5 215L235.8 218.4L236.2 218.6L236.5 218.4L236.8 219.9L237.2 216.3L237.5 222.4L237.8 216.4L238.2 214.5L238.5 216.8L238.8 221.9L239.2 213.3L239.5 213.7L239.8 219.3L240.2 212.7L240.5 216.9L240.8 208.1L241.2 217.7L241.5 209.4L241.8 209.5L242.2 215.8L242.5 218.9L242.8 219.3L243.2 217.9L243.5 220.2L243.8 221.6L244.2 217.9L244.5 214.5L244.8 221.7L245.2 217.3L245.5 216.6L245.8 218.7L246.2 214.2L246.5 214.2L246.8 216.8L247.2 220.2L247.5 221.9L247.8 224.3L248.2 223.1L248.5 224.4L248.8 221.5L249.2 222.6L249.5 221.2L249.8 216.3L250.2 216.2L250.5 223.3L250.8 217.1L251.2 226.6L251.5 218.5L251.8 213.4L252.2 225.1L252.5 216.5L252.8 212.2L253.2 213.5L253.5 213.4L253.8 214.1L254.2 218.1L254.5 213.1L254.8 216.2L255.2 218.2L255.5 222L255.8 214L256.2 214L256.5 215.5L256.8 215.3L257.2 214.3L257.5 212.9L257.8 213.8L258.2 213.4L258.5 215.5L258.8 216.6L259.2 212.9L259.5 210L259.8 208.8L260.2 210.1L260.5 206.3L260.8 211.3L261.2 214.8L261.5 212.8L261.8 207.2L262.2 205.1L262.5 204.9L262.8 208L263.2 206.7L263.5 209.3L263.8 202.8L264.2 199.2L264.5 207.6L264.8 205.9L265.2 204.8L265.5 209.9L265.8 201L266.2 202.1L266.5 206.1L266.8 206.5L267.2 210.9L267.5 211.2L267.8 207.6L268.2 209.6L268.5 209.3L268.8 203.7L269.2 208.5L269.5 205.5L269.8 206.1L270.2 204.1L270.5 202.6L270.8 211.1L271.2 209.8L271.5 210.2L271.8 206.4L272.2 208.5L272.5 207L272.8 212.1L273.2 215.4L273.5 215.7L273.8 218.1L274.2 212.3L274.5 217.6L274.8 211.9L275.2 216L275.5 211.8L275.8 216.1L276.2 222.8L276.5 214.3L276.8 214.3L277.2 218L277.5 215.7L277.8 215.7L278.2 213.5L278.5 215.9L278.8 222.7L279.2 225.1L279.5 220.3L279.8 230.1L280.2 229.4L280.5 222.2L280.8 223.2L281.2 227.9L281.5 224.4L281.8 231.4L282.2 225.9L282.5 230L282.8 230.2L283.2 225.8L283.5 232.7L283.8 228.4L284.2 225.7L284.5 223L284.8 224.8L285.2 224.5L285.5 214.7L285.8 222.3L286.2 214.4L286.5 218.1L286.8 207.2L287.2 206.8L287.5 203.8L287.8 205.2L288.2 202.8L288.5 196.6L288.8 204.8L289.2 200.6L289.5 205.5L289.8 190.8L290.2 199.2L290.5 195L290.8 197.2L291.2 199L291.5 196.1L291.8 194.4L292.2 192.8L292.5 199.4L292.8 197.8L293.2 198L293.5 192L293.8 194L294.2 198.3L294.5 191.8L294.8 197.3L295.2 194.4L295.5 191.2L295.8 193.2L296.2 190.6L296.5 197L296.8 197.9L297.2 191.3L297.5 194.4L297.8 199.5L298.2 194.2L298.5 198L298.8 200.4L299.2 197.8L299.5 193L299.8 200.2L300.2 197.8L300.5 202L300.8 191.9L301.2 193.6L301.5 190.9L301.8 187.9L302.2 187.9L302.5 186.9L302.8 188.1L303.2 188.8L303.5 192.8L303.8 192.1L304.2 192L304.5 194.4L304.8 185.8L305.2 188.3L305.5 184.2L305.8 187.3L306.2 182.9L306.5 182L306.8 181.7L307.2 184.2L307.5 187.7L307.8 181.9L308.2 187L308.5 180.9L308.8 181.2L309.2 183.1L309.5 178.2L309.8 182.3L310.2 183.7L310.5 186.3L310.8 176.1L311.2 184.2L311.5 180.6L311.8 186.2L312.2 172.4L312.5 181.9L312.8 173.5L313.2 176.1L313.5 175.1L313.8 179.4L314.2 175.1L314.5 179.7L314.8 169.5L315.2 174.6L315.5 173L315.8 171.7L316.2 172.8L316.5 171.3L316.8 167.6L317.2 170.9L317.5 162.5L317.8 167L318.2 166L318.5 162.1L318.8 173L319.2 167.2L319.5 158.8L319.8 161.1L320.2 157.5L320.5 164.6L320.8 157L321.2 158.7L321.5 161.3L321.8 161L322.2 154.7L322.5 167.1L322.8 152.7L323.2 161.2L323.5 154.3L323.8 159.9L324.2 156L324.5 154.9L324.8 156.6L325.2 157.7L325.5 165.4L325.8 158.6L326.2 152.5L326.5 148.3L326.8 151.8L327.2 152.5L327.5 156.2L327.8 153.2L328.2 151.5L328.5 148.3L328.8 155L329.2 146.2L329.5 153.3L329.8 155.4L330.2 154.2L330.5 143.2L330.8 149.8L331.2 157.7L331.5 145.5L331.8 153.5L332.2 149.8L332.5 149.9L332.8 148.7L333.2 138.9L333.5 150.6L333.8 142.5L334.2 154.3L334.5 156.1L334.8 144.8L335.2 149L335.5 148.6L335.8 154.7L336.2 141.3L336.5 140.5L336.8 142.1L337.2 151L337.5 149.9L337.8 145.4L338.2 139.3L338.5 148L338.8 144.4L339.2 140.1L339.5 147L339.8 143L340.2 142L340.5 141.2L340.8 144.4L341.2 140.4L341.5 142.2L341.8 149.6L342.2 137.8L342.5 139.4L342.8 142.9L343.2 148.2L343.5 147.3L343.8 144.8L344.2 147.2L344.5 145L344.8 131L345.2 130.8L345.5 136L345.8 144.1L346.2 142.7L346.5 147.4L346.8 138.3L347.2 146L347.5 136.8L347.8 146.9L348.2 147.6L348.5 134.2L348.8 138.1L349.2 142.5L349.5 147L349.8 136L350.2 135.3L350.5 126.6L350.8 131.3L351.2 150.6L351.5 144.5L351.8 128L352.2 136L352.5 145.7L352.8 137.3L353.2 145.3L353.5 136.8L353.8 137.5L354.2 133.5L354.5 135.1L354.8 140.5L355.2 126.9L355.5 135.1L355.8 135.1L356.2 135.5L356.5 134.4L356.8 135.5L357.2 136.3L357.5 140.7L357.8 143.8L358.2 143L358.5 142.8L358.8 141.9L359.2 139.9L359.5 137.1L359.8 129.8L360.2 144.3L360.5 137.9L360.8 120.8L361.2 128.8L361.5 137.1L361.8 133.4L362.2 136.9L362.5 142.2L362.8 136.6L363.2 119.2L363.5 127.2L363.8 137.1L364.2 137.4L364.5 133.6L364.8 134.8L365.2 141.4L365.5 143.9L365.8 142.9L366.2 131.9L366.5 126.5L366.8 136.2L367.2 139.4L367.5 132.5L367.8 131.4L368.2 137.1L368.5 144.4L368.8 131.4L369.2 136.9L369.5 137.9L369.8 142.7L370.2 141.6L370.5 120L370.8 135.1L371.2 128.8L371.5 126.8L371.8 134.2L372.2 143.7L372.5 142.4L372.8 135.3L373.2 138.1L373.5 143.5L373.8 133.1L374.2 143.2L374.5 118.4L374.8 126.4L375.2 139.7L375.5 139.7L375.8 121.7L376.2 125.6L376.5 132.1L376.8 137.6L377.2 139.2L377.5 127.2L377.8 123.9L378.2 135.7L378.5 141L378.8 139.6L379.2 129.8L379.5 138.2L379.8 132.7L380.2 124.9L380.5 117.3L380.8 103L381.2 111L381.5 133L381.8 130.9L382.2 139.9L382.5 133.5L382.8 141.4L383.2 125L383.5 138.4L383.8 132.9L384.2 140.9L384.5 137.5L384.8 92L385.2 100L385.5 139L385.8 126.5L386.2 138.8L386.5 140.4L386.8 124.2L387.2 126.5L387.5 138.8L387.8 142.3L388.2 141.1L388.5 133.2L388.8 139.9L389.2 126L389.5 126.5L389.8 135.4L390.2 134.4L390.5 104L390.8 105.6L391.2 104.5L391.5 142.2L391.8 130.2L392.2 131.9L392.5 135.4L392.8 142.2L393.2 127.7L393.5 136.7L393.8 131.7L394.2 131.4L394.5 128.7L394.8 132.4L395.2 134.3L395.5 120.4L395.8 132.9L396.2 135.3L396.5 139.2L396.8 98.4L397.2 106.4L397.5 141.1L397.8 126.3L398.2 123.8L398.5 140.1L398.8 127.8L399.2 125.6L399.5 129.9L399.8 102.5L400.2 129.2L400.5 138.8L400.8 127.8L401.2 124.6L401.5 126.2L401.8 144.9L402.2 130.2L402.5 128.8L402.8 137.1L403.2 140.2L403.5 131.6L403.8 137.7L404.2 126.5L404.5 128.1L404.8 100.8L405.2 108.8L405.5 126.3L405.8 124.4L406.2 125.9L406.5 137.9L406.8 137L407.2 122.5L407.5 111.1L407.8 135.3L408.2 138.2L408.5 131.7L408.8 142.1L409.2 124.6L409.5 110.4L409.8 137.2L410.2 117.9L410.5 124.2L410.8 119.7L411.2 95.2L411.5 103.2L411.8 118.6L412.2 130.2L412.5 139.6L412.8 107.2L413.2 121.3L413.5 103.3L413.8 128L414.2 98.4L414.5 88.8L414.8 96.8L415.2 122.2L415.5 139.3L415.8 117.8L416.2 100L416.5 126.5L416.8 117.2L417.2 104.6L417.5 215L417.8 118L418.2 131.6L418.5 132.6L418.8 145.3L419.2 91.8L419.5 108.6L419.8 88.8L420.2 96.8L420.5 127.2L420.8 123L421.2 141.8L421.5 124.1L421.8 121.5L422.2 136.3L422.5 135.5L422.8 117.8L423.2 95L423.5 103L423.8 129.2L424.2 131.1L424.5 132.1L424.8 140.1L425.2 97.9L425.5 117.1L425.8 114.3L426.2 98.6L426.5 140.3L426.8 98.1L427.2 130.7L427.5 141.7L427.8 134L428.2 130.4L428.5 135.1L428.8 145.2L429.2 140.5L429.5 101.6L429.8 109.6L430.2 126.4L430.5 123.4L430.8 136.9L431.2 138.4L431.5 114.6L431.8 122.2L432.2 127.7L432.5 135.5L432.8 137.3L433.2 130.8L433.5 134.6L433.8 131.5L434.2 139.8L434.5 123.9L434.8 136.4L435.2 126L435.5 140.5L435.8 130.5L436.2 119.8L436.5 131.8L436.8 129.7L437.2 109.2L437.5 98.4L437.8 106.4L438.2 136.3L438.5 135.8L438.8 125.6L439.2 109.2L439.5 130.8L439.8 139.9L440.2 113.5L440.5 130.2L440.8 143.2L441.2 138.8L441.5 104.8L441.8 112.8L442.2 140.5L442.5 142.7L442.8 138.2L443.2 146.5L443.5 125.6L443.8 124.9L444.2 147.6L444.5 128.9L444.8 104L445.2 112L445.5 136.6L445.8 125.3L446.2 139.8L446.5 130.5L446.8 114.7L447.2 118.3L447.5 138L447.8 133.2L448.2 136.9L448.5 141.2L448.8 138.6L449.2 130.3L449.5 92L449.8 100L450.2 137.3L450.5 122.4L450.8 136.3L451.2 137.1L451.5 131.9L451.8 129.9L452.2 131.2L452.5 129.6L452.8 120.6L453.2 133.4L453.5 143.3L453.8 139.4L454.2 129.9L454.5 103.2L454.8 111.2L455.2 140.8L455.5 143.6L455.8 130L456.2 137.5L456.5 133L456.8 133.9L457.2 142.3L457.5 146.6L457.8 134.2L458.2 118.2L458.5 135L458.8 130.7L459.2 140.5L459.5 132.6L459.8 142.3L460.2 143.5L460.5 132.8L460.8 118.4L461.2 126.4L461.5 128.3L461.8 121.5L462.2 143.3L462.5 142.7L462.8 141.5L463.2 117.7L463.5 146.4L463.8 137.9L464.2 145.5L464.5 140.3L464.8 140L465.2 144.9L465.5 124.7L465.8 141.3L466.2 140.5L466.5 138.2L466.8 145.3L467.2 149.9L467.5 140.4L467.8 139.4L468.2 151.2L468.5 142.7L468.8 129.1L469.2 143.4L469.5 129.7L469.8 151.2L470.2 147.6L470.5 134.6L470.8 139.5L471.2 148.9L471.5 150.9L471.8 119L472.2 127L472.5 136.3L472.8 148.1L473.2 150.4L473.5 143.5L473.8 136.5L474.2 144.9L474.5 120.8L474.8 128.8L475.2 152.2L475.5 156.2L475.8 138.5L476.2 143.9L476.5 147.8L476.8 144.2L477.2 138.1L477.5 141.2L477.8 145.2L478.2 146.7L478.5 141.7L478.8 138.6L479.2 138.1L479.5 139.9L479.8 153.4L480.2 140.7L480.5 143.9L480.8 146.6L481.2 136.4L481.5 146L481.8 147.1L482.2 138.1L482.5 154.4L482.8 147.1L483.2 140.1L483.5 155.3L483.8 135.4L484.2 150.9L484.5 146.6L484.8 130.4L485.2 135.3L485.5 146.8L485.8 145L486.2 138.4L486.5 146L486.8 146.5L487.2 151.2L487.5 142.5L487.8 139.8L488.2 154.2L488.5 140.5L488.8 150.8L489.2 146.8L489.5 157.2L489.8 143.2L490.2 155.1L490.5 142.3L490.8 143.2L491.2 152L491.5 143.3L491.8 151L492.2 151.3L492.5 143L492.8 155.1L493.2 148.6L493.5 158.5L493.8 141.4L494.2 142.7L494.5 158.7L494.8 130L495.2 138L495.5 158.2L495.8 147.6L496.2 141.9L496.5 144.9L496.8 152.5L497.2 156.6L497.5 156.5L497.8 151.2L498.2 147.3L498.5 145.2L498.8 147.7L499.2 147.5L499.5 160.4L499.8 151.5L500.2 146.5L500.5 156.1L500.8 153.1L501.2 145.6L501.5 162.7L501.8 162.3L502.2 150.4L502.5 160.7L502.8 154.2L503.2 158.2L503.5 158.1L503.8 164.6L504.2 154.7L504.5 149.8L504.8 161.4L505.2 155.3L505.5 155.5L505.8 161.2L506.2 160.1L506.5 165.5L506.8 155.4L507.2 159.8L507.5 150.6L507.8 151.3L508.2 154.1L508.5 155L508.8 158.2L509.2 155L509.5 167.3L509.8 159.2L510.2 158.9L510.5 168L510.8 166.7L511.2 166.7L511.5 169.5L511.8 167L512.2 160.5L512.5 171.7L512.8 156.9L513.2 171.6L513.5 164.3L513.8 163.5L514.2 166.2L514.5 165.6L514.8 173.3L515.2 172.8L515.5 172.2L515.8 164.4L516.2 168L516.5 162.6L516.8 173.2L517.2 162.8L517.5 168.6L517.8 165.6L518.2 176.8L518.5 178.5L518.8 169.8L519.2 179.1L519.5 169.7L519.8 178.2L520.2 172.3L520.5 175.9L520.8 178.6L521.2 175.4L521.5 173.6L521.8 179.5L522.2 182.7L522.5 185.8L522.8 176.9L523.2 170.7L523.5 174.3L523.8 176.9L524.2 175.3L524.5 179.1L524.8 186.2L525.2 179L525.5 186.7L525.8 183.1L526.2 183.1L526.5 187.2L526.8 186.8L527.2 187L527.5 183.1L527.8 188.6L528.2 192.8L528.5 182.1L528.8 183.1L529.2 189.1L529.5 186.1L529.8 185.7L530.2 194.5L530.5 187.1L530.8 194.4L531.2 191.3L531.5 185.2L531.8 188.2L532.2 186.5L532.5 191.9L532.8 196.2L533.2 187.4L533.5 187.5L533.8 187.7L534.2 190.4L534.5 189.5L534.8 198.9L535.2 195.9L535.5 197.7L535.8 194.4L536.2 197.2L536.5 196.4L536.8 192.6L537.2 196.6L537.5 188.9L537.8 195.4L538.2 199.3L538.5 193.6L538.8 193L539.2 199.6L539.5 195.6L539.8 192.5L540.2 193.8L540.5 193.2L540.8 201.7L541.2 194.9L541.5 199.3L541.8 195.1L542.2 200L542.5 200L542.8 196.8L543.2 199.2L543.5 194.5L543.8 193L544.2 198.1L544.5 192.9L544.8 191.8L545.2 199L545.5 201.2L545.8 204.6L546.2 199.6L546.5 208.3L546.8 206.6L547.2 209.9L547.5 210.3L547.8 216.4L548.2 213.1L548.5 212.4L548.8 222.7L549.2 223.1L549.5 225.7L549.8 221.9L550.2 224.8L550.5 231L550.8 233.6L551.2 232.4L551.5 229.4L551.8 227.7L552.2 220.4L552.5 221.1L552.8 217.6L553.2 219.4L553.5 214.9L553.8 215.6L554.2 213.9L554.5 216.2L554.8 216L555.2 208.2L555.5 214.7L555.8 212.1L556.2 209.6L556.5 213.7L556.8 216.9L557.2 215.9L557.5 208.5L557.8 208.9L558.2 213.3L558.5 215.6L558.8 206.1L559.2 205.8L559.5 211.3L559.8 210.6L560.2 212.7L560.5 206.7L560.8 209.8L561.2 212.9L561.5 208.6L561.8 208.6L562.2 204.9L562.5 212.4L562.8 208.2L563.2 206.8L563.5 208.9L563.8 210.2L564.2 209.6L564.5 203.7L564.8 205.6L565.2 202.7L565.5 206.5L565.8 206L566.2 204.6L566.5 208.4L566.8 202.9L567.2 203.4L567.5 199.2L567.8 204.5L568.2 200.2L568.5 209.4L568.8 196.8L569.2 200.3L569.5 202.1L569.8 202.4L570.2 202.3L570.5 199.7L570.8 204.3L571.2 204.9L571.5 204.7L571.8 203.4L572.2 201.9L572.5 206.8L572.8 202.5L573.2 212L573.5 207.1L573.8 207.2L574.2 209.7L574.5 207L574.8 215.2L575.2 216.5L575.5 215.3L575.8 213.2L576.2 217.1L576.5 210.9L576.8 212.1L577.2 209.1L577.5 211.6L577.8 216.9L578.2 214.7L578.5 213.9L578.8 214.1L579.2 215.5L579.5 215.6L579.8 214.4L580.2 215.3L580.5 211.6L580.8 214.9L581.2 217.1L581.5 212.5L581.8 212.9L582.2 218.1L582.5 211.3L582.8 211.8L583.2 218L583.5 210.9L583.8 213.1L584.2 219.6L584.5 215L584.8 219.5L585.2 219.1L585.5 211.7L585.8 213.7L586.2 220.6L586.5 214.7L586.8 215L587.2 219.9L587.5 211.1L587.8 219.3L588.2 215.5L588.5 214.9L588.8 208.1L589.2 213.9L589.5 215.4L589.8 211.3L590.2 208.4L590.5 209.2L590.8 208.9L591.2 212.5L591.5 220L591.8 209.5L592.2 213.2L592.5 213.4L592.8 213.1L593.2 214.9L593.5 215.5L593.8 212.8L594.2 219.2L594.5 217L594.8 215.8L595.2 222.5L595.5 220.4L595.8 215.6L596.2 224.2L596.5 227.5L596.8 219.1L597.2 218.7L597.5 217.5L597.8 219.9L598.2 220.9L598.5 221.8L598.8 228.4L599.2 224.6L599.5 220.8L599.8 222.8L600.2 223.6L600.5 220.2L600.8 224.3L601.2 224.9L601.5 229L601.8 224.7L602.2 227.7L602.5 228L602.8 223.4L603.2 227.7L603.5 221.8L603.8 224.5L604.2 223.5L604.5 233.6L604.8 224.4L605.2 232.3L605.5 226.9L605.8 223.9L606.2 232.6L606.5 229.4L606.8 226.7L607.2 231.7L607.5 231.8L607.8 225.7L608.2 235.9L608.5 238.1L608.8 234.4L609.2 241.8L609.5 245.8L609.8 245.5L610.2 248.6L610.5 252.5L610.8 252.1L611.2 250.3L611.5 252.7L611.8 253.9L612.2 256.9L612.5 245.3L612.8 244.3L613.2 245.6L613.5 250.2L613.8 244L614.2 244.8L614.5 249.6L614.8 242.5L615.2 243.8L615.5 243.3L615.8 241L616.2 247.8L616.5 238.8L616.8 243.4L617.2 241.9L617.5 238.4L617.8 245.4L618.2 235.1L618.5 238.2L618.8 241.8L619.2 237.3L619.5 238.1L619.8 236.1L620.2 238.2L620.5 235.5L620.8 236.7L621.2 232L621.5 231.9L621.8 236.6L622.2 239.4L622.5 241L622.8 238.2L623.2 234.4L623.5 234.7L623.8 234.6L624.2 235L624.5 237.5L624.8 230.8L625.2 224.7L625.5 234.9L625.8 230.1L626.2 229.7L626.5 238.5L626.8 230.5L627.2 240.1L627.5 241.2L627.8 234.5L628.2 241.2L628.5 237.4L628.8 236.9L629.2 243.8L629.5 242.6L629.8 241.1L630.2 232.2L630.5 242.8L630.8 238.4L631.2 242.2L631.5 239.9L631.8 232.2L632.2 243.2L632.5 244.9L632.8 246.7L633.2 245.4L633.5 240.8L633.8 250.4L634.2 247.3L634.5 244.1L634.8 243.9L635.2 247.8L635.5 254.7L635.8 248.1L636.2 257.3L636.5 249L636.8 256.8L637.2 252.6L637.5 256.2L637.8 254.1L638.2 261.8L638.5 253.9L638.8 256.5L639.2 257.5L639.5 255.5L639.8 252.7L640.2 253L640.5 259L640.8 250.1L641.2 248.2L641.5 256.4L641.8 255.3L642.2 252.5L642.5 250.5L642.8 256.1L643.2 251.4L643.5 248.2L643.8 253.5L644.2 255.5L644.5 256.8L644.8 261.3L645.2 254.2L645.5 263.1L645.8 260.9L646.2 264.1L646.5 262L646.8 260.3L647.2 258.8L647.5 256.4L647.8 256.3L648.2 255.9L648.5 256.4L648.8 248L649.2 248.9L649.5 247.8L649.8 249.6L650.2 247.3L650.5 245.3L650.8 244.7L651.2 241.8L651.5 245.3L651.8 245.5L652.2 242.7L652.5 238.1L652.8 240.9L653.2 239.1L653.5 238.1L653.8 238.9L654.2 243.9L654.5 239L654.8 239.5L655.2 238.8L655.5 236.6L655.8 240.3L656.2 238.6L656.5 243.7L656.8 240.4L657.2 243.8L657.5 242.5L657.8 238.7L658.2 233.8L658.5 235.7L658.8 234L659.2 239.4L659.5 232.7L659.8 237L660.2 233L660.5 233.9L660.8 235.9L661.2 230.6L661.5 228.7L661.8 225.2L662.2 237L662.5 239.2L662.8 231L663.2 229.9L663.5 229.4L663.8 232.4L664.2 235.5L664.5 234.2L664.8 239.8L665.2 238.6L665.5 233.8L665.8 225.2L666.2 235.1L666.5 227.5L666.8 233.8L667.2 234.5L667.5 232.9L667.8 226.2L668.2 231.1L668.5 233.4L668.8 229.6L669.2 234L669.5 227.2L669.8 230.9L670.2 231.3L670.5 233.7L670.8 229.3L671.2 227.1L671.5 235L671.8 224.5L672.2 226.7L672.5 227.6L672.8 230.7L673.2 227L673.5 228.3L673.8 230.1L674.2 230.7L674.5 234.3L674.8 230L675.2 231.7L675.5 226.9L675.8 229.2L676.2 230.5L676.5 230.8L676.8 234L677.2 231L677.5 234.9L677.8 237.7L678.2 230.3L678.5 232.2L678.8 235L679.2 230.6L679.5 231.8L679.8 236.4L680.2 235L680.5 240.3L680.8 237.3L681.2 239.5L681.5 235.6L681.8 236.3L682.2 241.3L682.5 239.3L682.8 242.6L683.2 236.2L683.5 235L683.8 240.9L684.2 235.6L684.5 235.3L684.8 238.6L685.2 241.8L685.5 238.8L685.8 243.1L686.2 240.6L686.5 239.3L686.8 242.3L687.2 243.4L687.5 239.3L687.8 244.2L688.2 240.4L688.5 248.8L688.8 244.6L689.2 241.4L689.5 239.9L689.8 241.8L690.2 242.9L690.5 245.6L690.8 246.6L691.2 247.2L691.5 244.6L691.8 246.9L692.2 246.6L692.5 244.6L692.8 244.4L693.2 246.7L693.5 250.2L693.8 243.6L694.2 250.7L694.5 245.1L694.8 246.7L695.2 251.5L695.5 252.8L695.8 252.4L696.2 251.5L696.5 247.1L696.8 254.4L697.2 250.4L697.5 253.5L697.8 254.6L698.2 248.4L698.5 256.5L698.8 248.5L699.2 254.9L699.5 251.9L699.8 252.1L700.2 258.8L700.5 257.1L700.8 263.8L701.2 261.5L701.5 260.6L701.8 258.9L702.2 266.8L702.5 267.2L702.8 269.9L703.2 266.6L703.5 273L703.8 265.9L704.2 276.3L704.5 279.7L704.8 268.6L705.2 278.2L705.5 269.2L705.8 276.4L706.2 271.5L706.5 276.5L706.8 277.4L707.2 269.2L707.5 270.8L707.8 276.3L708.2 264.6L708.5 267.2L708.8 265.9L709.2 265.7L709.5 264.9L709.8 267.4L710.2 271.8L710.5 268.1L710.8 264L711.2 266.6L711.5 267.8L711.8 267.2L712.2 269.1L712.5 275.5L712.8 269.5L713.2 266.5L713.5 260.3L713.8 270.9L714.2 267.5L714.5 266.3L714.8 262.4L715.2 266.9L715.5 257.4L715.8 264.5L716.2 263.3L716.5 265.2L716.8 258.8L717.2 269.8L717.5 259.9L717.8 262.3L718.2 266.9L718.5 268.3L718.8 264.1L719.2 265.6L719.5 273.2L719.8 266.6L720.2 268.4L720.5 264.8L720.8 270.4L721.2 272.3L721.5 273.1L721.8 267.6L722.2 269.6L722.5 273.4L722.8 277.5L723.2 275.5L723.5 269.4L723.8 268L724.2 271.5L724.5 274.3L724.8 271.6L725.2 278.2L725.5 272.2L725.8 271L726.2 277.1L726.5 279.4L726.8 273.1L727.2 274.9L727.5 274L727.8 271.3L728.2 279.3L728.5 271.8L728.8 278.6L729.2 278.9L729.5 277.8L729.8 272.1L730.2 272.1L730.5 277.9L730.8 277.5L731.2 271.7L731.5 271.5L731.8 280.6L732.2 275.1L732.5 279.6L732.8 273.3L733.2 274L733.5 281.5L733.8 273.2L734.2 275.9L734.5 277.1L734.8 279.8L735.2 275.2L735.5 279.3L735.8 274.3L736.2 285.5L736.5 272.1L736.8 274.1L737.2 272.5L737.5 273L737.8 280.7L738.2 277.2L738.5 281L738.8 283.3L739.2 273.8L739.5 280.7L739.8 283.3L740.2 275.5L740.5 272.9L740.8 277.7L741.2 278.8L741.5 280.7L741.8 279.4L742.2 276.4L742.5 274.8L742.8 276.8L743.2 278.2L743.5 274.7L743.8 275.9L744.2 282.8L744.5 277.2L744.8 273.4L745.2 279.8L745.5 275.9L745.8 278L746.2 276.7L746.5 273.5L746.8 284.5L747.2 279.3L747.5 284.5L747.8 272.9L748.2 279.9L748.5 278.3L748.8 278.2L749.2 281.5L749.5 269.8L749.8 277.4L750.2 274L750.5 279.1L750.8 277.4L751.2 272.5L751.5 274.6L751.8 276.6L752.2 278.3L752.5 273.2L752.8 279.5L753.2 282L753.5 276.3L753.8 273.1L754.2 274.2L754.5 281.6L754.8 278.7L755.2 273.7L755.5 270.6L755.8 281.7L756.2 279.7L756.5 279.7L756.8 272.8L757.2 282.8L757.5 273.8L757.8 275.2L758.2 274L758.5 285L758.8 279.2L759.2 278.4L759.5 277L759.8 280.8L760.2 272L760.5 278.2L760.8 274.3L761.2 282.3L761.5 273L761.8 283L762.2 283L762.5 278.1L762.8 273.7L763.2 274.2L763.5 273.1L763.8 280L764.2 276.2L764.5 283.8L764.8 276.3L765.2 276.3L765.5 280.7L765.8 283.3L766.2 279.3L766.5 274.6L766.8 275.1L767.2 281.6L767.5 282.2L767.8 284.8L768.2 279.7L768.5 282.2L768.8 287.2L769.2 279.3L769.5 282.3L769.8 275L770.2 274.4L770.5 276.3L770.8 277.2L771.2 284L771.5 282.4L771.8 281.5L772.2 283.2L772.5 277.1L772.8 284.3L773.2 283.4L773.5 274.8L773.8 277.1L774.2 276.3L774.5 274.9L774.8 283.8L775.2 277.3L775.5 283L775.8 279.8L776.2 273.4L776.5 277.9L776.8 285.5L777.2 276.6L777.5 276.3L777.8 273.9L778.2 278.5L778.5 284.2L778.8 273.1L779.2 286L779.5 280.1L779.8 276.3L780.2 283.8L780.5 284.1" stroke="#62c81a"/>
</g>
<rect x="55.5" y="60.5" width="725" height="374" fill="none" stroke="#c4c4c4" stroke-width="1"/>
<path d="M56.5 434.5v-3 M56.5 60.5v3M72.5 434.5v-3 M72.5 60.5v3M89.5 434.5v-6 M89.5 60.5v6M105.5 434.5v-3 M105.5 60.5v3M122.5 434.5v-3 M122.5 60.5v3M138.5 434.5v-3 M138.5 60.5v3M155.5 434.5v-3 M155.5 60.5v3M171.5 434.5v-6 M171.5 60.5v6M187.5 434.5v-3 M187.5 60.5v3M204.5 434.5v-3 M204.5 60.5v3M220.5 434.5v-3 M220.5 60.5v3M237.5 434.5v-3 M237.5 60.5v3M253.5 434.5v-6 M253.5 60.5v6M270.5 434.5v-3 M270.5 60.5v3M286.5 434.5v-3 M286.5 60.5v3M303.5 434.5v-3 M303.5 60.5v3M319.5 434.5v-3 M319.5 60.5v3M335.5 434.5v-6 M335.5 60.5v6M352.5 434.5v-3 M352.5 60.5v3M368.5 434.5v-3 M368.5 60.5v3M385.5 434.5v-3 M385.5 60.5v3M401.5 434.5v-3 M401.5 60.5v3M418.5 434.5v-6 M418.5 60.5v6M434.5 434.5v-3 M434.5 60.5v3M450.5 434.5v-3 M450.5 60.5v3M467.5 434.5v-3 M467.5 60.5v3M483.5 434.5v-3 M483.5 60.5v3M500.5 434.5v-6 M500.5 60.5v6M516.5 434.5v-3 M516.5 60.5v3M533.5 434.5v-3 M533.5 60.5v3M549.5 434.5v-3 M549.5 60.5v3M566.5 434.5v-3 M566.5 60.5v3M582.5 434.5v-6 M582.5 60.5v6M598.5 434.5v-3 M598.5 60.5v3M615.5 434.5v-3 M615.5 60.5v3M631.5 434.5v-3 M631.5 60.5v3M648.5 434.5v-3 M648.5 60.5v3M664.5 434.5v-6 M664.5 60.5v6M681.5 434.5v-3 M681.5 60.5v3M697.5 434.5v-3 M697.5 60.5v3M714.5 434.5v-3 M714.5 60.5v3M730.5 434.5v-3 M730.5 60.5v3M746.5 434.5v-6 M746.5 60.5v6M763.5 434.5v-3 M763.5 60.5v3M779.5 434.5v-3 M779.5 60.5v3M55.5 75.5h6 M780.5 75.5h-6M55.5 91.5h3 M780.5 91.5h-3M55.5 107.5h6 M780.5 107.5h-6M55.5 124.5h3 M780.5 124.5h-3M55.5 140.5h6 M780.5 140.5h-6M55.5 156.5h3 M780.5 156.5h-3M55.5 173.5h6 M780.5 173.5h-6M55.5 189.5h3 M780.5 189.5h-3M55.5 205.5h6 M780.5 205.5h-6M55.5 222.5h3 M780.5 222.5h-3M55.5 238.5h6 M780.5 238.5h-6M55.5 254.5h3 M780.5 254.5h-3M55.5 271.5h6 M780.5 271.5h-6M55.5 287.5h3 M780.5 287.5h-3M55.5 303.5h6 M780.5 303.5h-6M55.5 320.5h3 M780.5 320.5h-3M55.5 336.5h6 M780.5 336.5h-6M55.5 352.5h3 M780.5 352.5h-3M55.5 369.5h6 M780.5 369.5h-6M55.5 385.5h3 M780.5 385.5h-3M55.5 401.5h6 M780.5 401.5h-6M55.5 418.5h3 M780.5 418.5h-3M55.5 434.5h6 M780.5 434.5h-6" stroke="#c4c4c4" stroke-width="1" fill="none"/>
<text x="417.5" y="467" font-size="13" fill="#d2d2d2" text-anchor="middle" font-family="Liberation Sans">Frequency (kHz)</text>
<text transform="translate(18.5,246.5) rotate(-90)" font-size="13" fill="#d2d2d2" text-anchor="middle" font-family="Liberation Sans">Power (dBm)</text>
<g font-size="11" fill="#d2d2d2" font-family="Liberation Sans"><text x="50.5" y="79.8" text-anchor="end">20</text><text x="50.5" y="112.4" text-anchor="end">0</text><text x="50.5" y="145.1" text-anchor="end">-20</text><text x="50.5" y="177.8" text-anchor="end">-40</text><text x="50.5" y="210.4" text-anchor="end">-60</text><text x="50.5" y="243.1" text-anchor="end">-80</text><text x="50.5" y="275.8" text-anchor="end">-100</text><text x="50.5" y="308.4" text-anchor="end">-120</text><text x="50.5" y="341.1" text-anchor="end">-140</text><text x="50.5" y="373.8" text-anchor="end">-160</text><text x="50.5" y="406.4" text-anchor="end">-180</text><text x="50.5" y="439.1" text-anchor="end">-200</text><text x="89.3" y="449.2" text-anchor="middle">-20</text><text x="171.5" y="449.2" text-anchor="middle">-15</text><text x="253.7" y="449.2" text-anchor="middle">-10</text><text x="335.9" y="449.2" text-anchor="middle">-5</text><text x="418.1" y="449.2" text-anchor="middle">0</text><text x="500.3" y="449.2" text-anchor="middle">5</text><text x="582.5" y="449.2" text-anchor="middle">10</text><text x="664.7" y="449.2" text-anchor="middle">15</text><text x="746.9" y="449.2" text-anchor="middle">20</text></g>
</svg>
<div id="sb"></div>
<div class="st" style="left:7px">Ready</div>
<div class="st" style="left:78px">&#916;T=100.0000 ms</div>
<div class="st" style="left:176px">Samples/Update=1323</div>
<div class="st" style="left:305px">VBW=235.7851 mHz</div>
<div class="st" style="left:423px">RBW=10.0000 Hz</div>
<div class="st" style="left:525px">Sample Rate=44.1000 kHz</div>
<div class="st" style="left:675px">Updates=833</div>
<div class="st" style="left:753px">T=24.984</div>
</body></html>
